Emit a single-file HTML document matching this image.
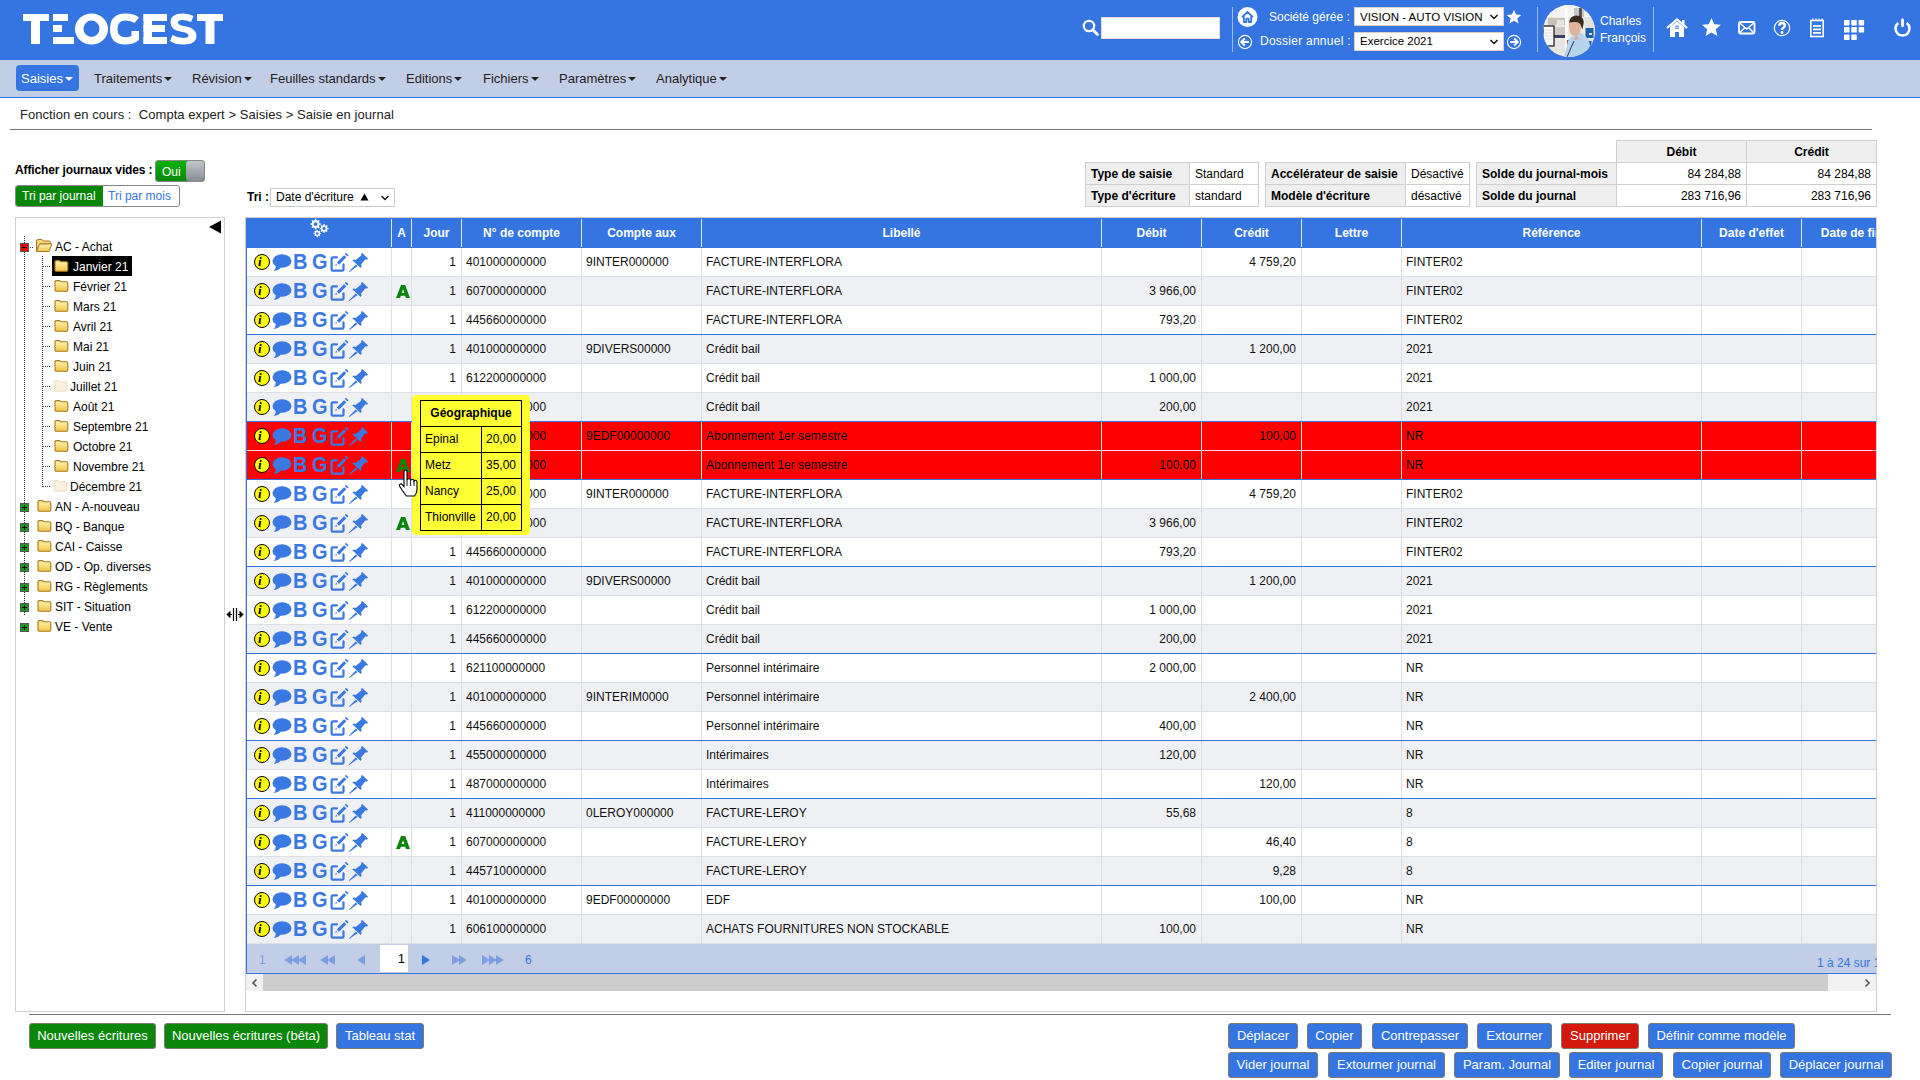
<!DOCTYPE html><html><head><meta charset="utf-8"><title>Teogest</title><style>
*{box-sizing:border-box}
html,body{margin:0;padding:0}
body{width:1920px;height:1080px;overflow:hidden;position:relative;background:#fff;font-family:"Liberation Sans",sans-serif;font-size:12px;color:#000}
.a{position:absolute;white-space:pre}
#top{position:absolute;left:0;top:0;width:1920px;height:60px;background:#3575e2}
#menu{position:absolute;left:0;top:60px;width:1920px;height:38px;background:#c2cee5;border-bottom:1px solid #3575e2}
.mi{position:absolute;top:66px;height:26px;line-height:26px;font-size:13px;color:#222;white-space:pre}
.caret{display:inline-block;width:0;height:0;border-left:4px solid transparent;border-right:4px solid transparent;border-top:4px solid #222;vertical-align:middle;margin-left:2px;position:relative;top:-1px}
.wt{color:#fff}
.btn{position:absolute;height:26px;line-height:24px;font-size:13px;color:#fff;border:1px solid #7d7a70;border-radius:3px;padding:0;text-align:center;white-space:pre}
.bb{background:#3575e2}.bg{background:#0a870a}.br{background:#d2190b}
.it{position:absolute;border-collapse:collapse;font-size:12px}
.it td{border:1px solid #cfcfcf;height:22px;padding:0 5px;white-space:pre}
.it td.l{background:#efefef;font-weight:bold}
.row{position:absolute;left:247px;width:1629px;height:29px;border-bottom:1px solid #dcdfe6;overflow:hidden}
.row.g{background:#eff0f4}
.row.w{background:#fff}
.row.r{background:#ff0000;border-bottom-color:#ffd9d9}
.row.sep{border-bottom-color:#3575e2}
.c{position:absolute;top:0;height:28px;line-height:28px;white-space:pre;overflow:hidden}
.vl{position:absolute;top:0;width:1px;height:28px;background:#dcdfe6}
.r .vl{background:#ffe0e0}
.c.rt{text-align:right;padding-right:5px}
.c.lt{padding-left:4px}
.hd{position:absolute;top:218px;height:30px;line-height:30px;color:#fff;font-weight:bold;text-align:center;white-space:pre}
.hsep{position:absolute;top:219px;width:1px;height:28px;background:#e6e9ee}
.tn{position:absolute;height:20px;line-height:22px;white-space:pre}
</style></head><body>
<div id="top"></div>
<svg class="a" style="left:0;top:0" width="240" height="60" viewBox="0 0 240 60">
<g fill="#fff">
<rect x="23" y="14" width="26" height="7"/><rect x="31" y="14" width="9" height="30"/>
<rect x="53" y="14" width="15" height="7"/><rect x="53" y="25" width="9" height="7"/><rect x="53" y="37" width="21" height="7"/>
<path d="M91.5 13.5a16.5 15.5 0 1 1 0 31a16.5 15.5 0 1 1 0-31zM91.5 20.6a8 8.2 0 1 0 0 16.4a8 8.2 0 1 0 0-16.4z" fill-rule="evenodd"/>
<path d="M139 17.5 L134.5 23 Q131 20.5 125.5 20.5 Q117.5 20.5 117.5 29 Q117.5 37.3 125.5 37.3 Q129 37.3 131.5 36 L131.5 31 L139 31 L139 40 Q133.5 44.5 125 44.5 Q110 44.5 110 29 Q110 13.5 125.5 13.5 Q134.5 13.5 139 17.5Z"/>
<rect x="143.5" y="14" width="8.5" height="30"/><rect x="143.5" y="14" width="23.5" height="7"/><rect x="143.5" y="25" width="21.5" height="7"/><rect x="143.5" y="37" width="23.5" height="7"/>
<path d="M193.5 16 L191 22 Q186 20 182 20 Q178 20 178 22.5 Q178 25 184 26 Q196.5 28 196.5 35.5 Q196.5 44.5 183.5 44.5 Q175 44.5 170 41 L172.5 35 Q177.5 38 183 38 Q188.5 38 188.5 35.5 Q188.5 33 182.5 32 Q170.5 30.5 170.5 22.5 Q170.5 13.5 183 13.5 Q189 13.5 193.5 16Z"/>
<rect x="197" y="14" width="26" height="7"/><rect x="205.5" y="14" width="9" height="30"/>
</g></svg>
<svg class="a" style="left:1082px;top:19px" width="18" height="18" viewBox="0 0 18 18"><circle cx="7" cy="7" r="5.2" fill="none" stroke="#fff" stroke-width="2.2"/><path d="M10.8 10.8 L15.5 15.5" stroke="#fff" stroke-width="2.8" stroke-linecap="round"/></svg>
<div class="a" style="left:1101px;top:17px;width:119px;height:22px;background:#fff;border:1px solid #e8e0d8"></div>
<div class="a" style="left:1232px;top:7px;width:1px;height:45px;background:#9dbbf0"></div>
<svg class="a" style="left:1237px;top:7px" width="22" height="21" viewBox="0 0 22 21"><circle cx="10.5" cy="10" r="10" fill="#fff"/><path d="M5 10.2 L10.5 5 L16 10.2 M6.8 9 V15 H9.3 V11.6 H11.7 V15 H14.2 V9" fill="none" stroke="#3575e2" stroke-width="1.8" stroke-linejoin="round"/></svg>
<svg class="a" style="left:1237px;top:34px" width="16" height="16" viewBox="0 0 16 16"><circle cx="8" cy="8" r="6.6" fill="none" stroke="#fff" stroke-width="1.1"/><path d="M12 8 H4.5 M7.8 4.5 L4.3 8 L7.8 11.5" fill="none" stroke="#fff" stroke-width="2"/></svg>
<div class="a wt" style="left:1269px;top:9px;line-height:16px;font-size:12px">Société gérée :</div>
<div class="a wt" style="left:1260px;top:33px;line-height:16px;font-size:12px;letter-spacing:0.25px">Dossier annuel :</div>
<div class="a" style="left:1354px;top:7px;width:150px;height:19px;background:#fff;border:1px solid #d8d0c4"></div>
<div class="a" style="left:1360px;top:8px;line-height:19px;font-size:11.5px">VISION - AUTO VISION</div>
<svg class="a" style="left:1489px;top:13px" width="10" height="8" viewBox="0 0 10 8"><path d="M1.5 2 L5 5.5 L8.5 2" fill="none" stroke="#111" stroke-width="1.5"/></svg>
<div class="a" style="left:1354px;top:32px;width:150px;height:19px;background:#fff;border:1px solid #d8d0c4"></div>
<div class="a" style="left:1360px;top:32px;line-height:19px;font-size:11.5px">Exercice 2021</div>
<svg class="a" style="left:1489px;top:38px" width="10" height="8" viewBox="0 0 10 8"><path d="M1.5 2 L5 5.5 L8.5 2" fill="none" stroke="#111" stroke-width="1.5"/></svg>
<svg class="a" style="left:1506px;top:9px" width="16" height="16" viewBox="0 0 16 16"><path d="M8 0.8 L10.1 5.6 L15.3 6 L11.3 9.4 L12.6 14.6 L8 11.8 L3.4 14.6 L4.7 9.4 L0.7 6 L5.9 5.6Z" fill="#fff"/></svg>
<svg class="a" style="left:1506px;top:34px" width="16" height="16" viewBox="0 0 16 16"><circle cx="8" cy="8" r="6.6" fill="none" stroke="#fff" stroke-width="1.1"/><path d="M4 8 H11.5 M8.2 4.5 L11.7 8 L8.2 11.5" fill="none" stroke="#fff" stroke-width="2"/></svg>
<div class="a" style="left:1537px;top:7px;width:1px;height:45px;background:#9dbbf0"></div>
<svg class="a" style="left:1543px;top:5px" width="52" height="52" viewBox="0 0 52 52"><defs><clipPath id="cp"><circle cx="26" cy="26" r="26"/></clipPath></defs>
<g clip-path="url(#cp)"><rect width="52" height="52" fill="#ecebe8"/>
<rect x="0" y="0" width="52" height="12" fill="#f3f3f1"/>
<rect x="5" y="13" width="17" height="7" fill="#c9c0b9"/><rect x="14" y="15" width="7" height="6" fill="#e8e4e0"/>
<rect x="5" y="22" width="17" height="8" fill="#d2cbc5"/><rect x="10" y="30" width="12" height="3" fill="#3c3f66"/>
<rect x="5" y="34" width="17" height="14" fill="#e6e5e2"/>
<rect x="22" y="0" width="3" height="52" fill="#fbfbfb"/>
<rect x="31" y="3" width="10" height="9" fill="#c8c8c8"/><rect x="36" y="3" width="3" height="9" fill="#555"/>
<rect x="42" y="12" width="10" height="40" fill="#e4e2de"/>
<rect x="42.5" y="23" width="8" height="10" fill="#1e60aa"/><rect x="46" y="28" width="3" height="2" fill="#ddd"/><rect x="42.5" y="36" width="6" height="6" fill="#1e5fa0"/>
<rect x="0" y="21" width="11" height="20" fill="#fafafa" stroke="#222" stroke-width="1.3"/>
<path d="M1.5 25 H9.5 M1.5 28 H9.5 M1.5 31 H9.5 M1.5 34 H9.5" stroke="#ccd" stroke-width="0.6"/>
<rect x="24" y="35" width="2" height="10" fill="#b33"/>
<path d="M21 52 L25 36 Q31 27 38 28 Q45 31 47 40 L48 52Z" fill="#b6d3ec"/>
<path d="M24 52 L31 36" stroke="#2a3550" stroke-width="1"/>
<path d="M26 20 Q25 14 30 13 Q37 12.5 38 19 L37.5 26 Q36 31 31 31 Q27 30 26.5 25Z" fill="#e0b49a"/>
<path d="M26.3 17.5 Q26.5 11 33 10.5 Q40.5 10.5 40.8 17 L39.5 24.5 Q38.3 22 37.6 19.5 Q36 16.5 31 17 Q28 17.3 26.3 17.5Z" fill="#3b2a20"/>
<path d="M33 30 L36 34 L31 35Z" fill="#d8ab92"/>
</g></svg>
<div class="a wt" style="left:1600px;top:13px;line-height:16px;font-size:12px">Charles</div>
<div class="a wt" style="left:1600px;top:30px;line-height:16px;font-size:12px">François</div>
<div class="a" style="left:1653px;top:7px;width:1px;height:45px;background:#9dbbf0"></div>
<svg class="a" style="left:1666px;top:18px" width="22" height="20" viewBox="0 0 22 20"><path d="M1 10 L11 1.5 L21 10" fill="none" stroke="#fff" stroke-width="2.2"/><path d="M4 9 L11 3.5 L18 9 V19 H13 V14 H9 V19 H4Z" fill="#fff"/><rect x="16" y="2" width="2.5" height="5" fill="#fff"/><rect x="9.3" y="7.6" width="1.4" height="1.4" fill="#3575e2"/><rect x="11.3" y="7.6" width="1.4" height="1.4" fill="#3575e2"/><rect x="9.3" y="9.6" width="1.4" height="1.4" fill="#3575e2"/><rect x="11.3" y="9.6" width="1.4" height="1.4" fill="#3575e2"/></svg>
<svg class="a" style="left:1701px;top:17px" width="21" height="20" viewBox="0 0 21 20"><path d="M10.5 1 L13.2 7.3 L20 7.8 L14.8 12.2 L16.4 19 L10.5 15.4 L4.6 19 L6.2 12.2 L1 7.8 L7.8 7.3Z" fill="#fff"/></svg>
<svg class="a" style="left:1738px;top:21px" width="18" height="14" viewBox="0 0 18 14"><rect x="1" y="1" width="15.5" height="11.5" rx="1.5" fill="none" stroke="#fff" stroke-width="1.8"/><path d="M2 2.2 L8.75 8 L15.5 2.2 M2 11.5 L6.5 7 M15.5 11.5 L11 7" fill="none" stroke="#fff" stroke-width="1.5"/></svg>
<svg class="a" style="left:1773px;top:19px" width="18" height="18" viewBox="0 0 18 18"><circle cx="9" cy="9" r="7.7" fill="none" stroke="#fff" stroke-width="1.2"/><path d="M6.3 6.8 Q6.3 4 9 4 Q11.8 4 11.8 6.5 Q11.8 8 10 9 Q9 9.6 9 11" fill="none" stroke="#fff" stroke-width="2.4"/><circle cx="9" cy="13.5" r="1.4" fill="#fff"/></svg>
<svg class="a" style="left:1809px;top:18px" width="16" height="20" viewBox="0 0 16 20"><rect x="1.8" y="2.5" width="12.4" height="16" fill="none" stroke="#fff" stroke-width="1.6"/><path d="M4 2 V0.5 M7 2 V0.5 M10 2 V0.5 M13 2 V0.5" stroke="#fff" stroke-width="1.2"/><rect x="4" y="7" width="8" height="1.8" fill="#fff"/><rect x="4" y="10.5" width="8" height="1.8" fill="#fff"/><rect x="4" y="14" width="8" height="1.8" fill="#fff"/></svg>
<svg class="a" style="left:1840px;top:16px" width="28" height="28" viewBox="0 0 28 28"><g fill="#fff"><rect x="4" y="3.9" width="5.5" height="5.5" rx="0.6"/><rect x="11.3" y="3.9" width="5.5" height="5.5" rx="0.6"/><rect x="18.6" y="3.9" width="5.5" height="5.5" rx="0.6"/><rect x="4" y="11.1" width="5.5" height="5.5" rx="0.6"/><rect x="11.3" y="11.1" width="5.5" height="5.5" rx="0.6"/><rect x="18.6" y="11.1" width="5.5" height="5.5" rx="0.6"/><rect x="4" y="18.4" width="5.5" height="5.5" rx="0.6"/><rect x="11.3" y="18.4" width="5.5" height="5.5" rx="0.6"/></g></svg>
<svg class="a" style="left:1893px;top:18px" width="19" height="20" viewBox="0 0 19 20"><path d="M5.3 5 A7 7 0 1 0 13.7 5" fill="none" stroke="#fff" stroke-width="2.5"/><rect x="8.1" y="0.5" width="2.8" height="8.5" rx="1.3" fill="#fff"/></svg>
<div id="menu"></div>
<div class="a" style="left:16px;top:65px;width:63px;height:26px;background:#3575e2;border-radius:4px"></div>
<div class="mi" style="left:21px;color:#fff">Saisies<span class="caret" style="border-top-color:#fff"></span></div>
<div class="mi" style="left:94px;color:#222">Traitements<span class="caret" style="border-top-color:#222"></span></div>
<div class="mi" style="left:192px;color:#222">Révision<span class="caret" style="border-top-color:#222"></span></div>
<div class="mi" style="left:270px;color:#222">Feuilles standards<span class="caret" style="border-top-color:#222"></span></div>
<div class="mi" style="left:406px;color:#222">Editions<span class="caret" style="border-top-color:#222"></span></div>
<div class="mi" style="left:483px;color:#222">Fichiers<span class="caret" style="border-top-color:#222"></span></div>
<div class="mi" style="left:559px;color:#222">Paramètres<span class="caret" style="border-top-color:#222"></span></div>
<div class="mi" style="left:656px;color:#222">Analytique<span class="caret" style="border-top-color:#222"></span></div>
<div class="a" style="left:20px;top:107px;line-height:16px;font-size:13px;color:#222;letter-spacing:0.05px">Fonction en cours :  Compta expert &gt; Saisies &gt; Saisie en journal</div>
<div class="a" style="left:10px;top:129px;width:1862px;height:1px;background:#777"></div>
<div class="a" style="left:15px;top:162px;line-height:16px;font-weight:bold;letter-spacing:-0.13px">Afficher journaux vides :</div>
<div class="a" style="left:155px;top:160px;width:50px;height:22px;border:1px solid #888;border-radius:3px;overflow:hidden;background:linear-gradient(#0bb30b,#088808)"><div class="a" style="left:6px;top:1px;line-height:20px;color:#fff;font-size:12px">Oui</div><div class="a" style="left:30px;top:0;width:19px;height:20px;border-radius:3px;background:linear-gradient(#c3c6cb,#878d95)"></div></div>
<div class="a" style="left:15px;top:185px;width:165px;height:22px;border:1px solid #888;border-radius:3px;background:#fff;overflow:hidden"><div class="a" style="left:0;top:0;width:87px;height:20px;background:#0a870a"></div><div class="a" style="left:6px;top:0;line-height:20px;color:#fff">Tri par journal</div><div class="a" style="left:92px;top:0;line-height:20px;color:#3575e2">Tri par mois</div></div>
<div class="a" style="left:247px;top:189px;line-height:16px;font-weight:bold">Tri :</div>
<div class="a" style="left:270px;top:188px;width:125px;height:19px;border:1px solid #ccc;background:#fff"></div>
<div class="a" style="left:276px;top:188px;line-height:18px">Date d'écriture</div><svg class="a" style="left:360px;top:193px" width="9" height="8" viewBox="0 0 9 8"><path d="M4.5 0.6 L8.5 7.6 H0.5Z" fill="#000"/></svg>
<svg class="a" style="left:380px;top:194px" width="10" height="8" viewBox="0 0 10 8"><path d="M1.5 2 L5 5.5 L8.5 2" fill="none" stroke="#111" stroke-width="1.4"/></svg>
<table class="it" style="left:1085px;top:162px">
<tr><td class="l" style="width:104px">Type de saisie</td><td style="width:69px;text-align:left">Standard</td></tr>
<tr><td class="l" style="width:104px">Type d'écriture</td><td style="width:69px;text-align:left">standard</td></tr>
</table>
<table class="it" style="left:1265px;top:162px">
<tr><td class="l" style="width:140px">Accélérateur de saisie</td><td style="width:64px;text-align:left">Désactivé</td></tr>
<tr><td class="l" style="width:140px">Modèle d'écriture</td><td style="width:64px;text-align:left">désactivé</td></tr>
</table>
<table class="it" style="left:1476px;top:140px">
<tr><td style="border:none;width:140px;height:22px"></td><td class="l" style="width:130px;text-align:center">Débit</td><td class="l" style="width:130px;text-align:center">Crédit</td></tr>
<tr><td class="l">Solde du journal-mois</td><td style="text-align:right">84 284,88</td><td style="text-align:right">84 284,88</td></tr>
<tr><td class="l">Solde du journal</td><td style="text-align:right">283 716,96</td><td style="text-align:right">283 716,96</td></tr>
</table>
<div class="a" style="left:15px;top:217px;width:210px;height:795px;border:1px solid #d0d0d0;background:#fff"></div>
<svg class="a" style="left:208px;top:219px" width="14" height="16" viewBox="0 0 14 16"><path d="M1 8 L13 1.5 V14.5Z" fill="#000"/></svg>
<div class="a" style="left:24px;top:236px;width:1px;height:380px;background:repeating-linear-gradient(#333 0 1px,transparent 1px 2px)"></div>
<div class="a" style="left:42px;top:256px;width:1px;height:231px;background:repeating-linear-gradient(#333 0 1px,transparent 1px 2px)"></div>
<div class="a" style="left:20px;top:243px;width:9px;height:9px;background:#e00;border:1px solid #555"><div class="a" style="left:1px;top:3px;width:5px;height:1px;background:#000"></div></div>
<div class="a" style="left:30px;top:247px;width:4px;height:1px;background:repeating-linear-gradient(90deg,#333 0 1px,transparent 1px 2px)"></div>
<svg class="a" style="left:35px;top:238px" width="18" height="15" viewBox="0 0 18 15"><defs><linearGradient id="fo" x1="0" y1="0" x2="0" y2="1"><stop offset="0" stop-color="#fff6c4"/><stop offset="1" stop-color="#f0c24a"/></linearGradient></defs><path d="M1.5 3 Q1.5 1.5 3 1.5 H7 L8.5 3 H14 Q15.5 3 15.5 4.5 V6 H5 L1.5 13Z" fill="#f7d77a" stroke="#a7791e" stroke-width="1"/><path d="M4.5 6 H17 L14 13.5 H1.5Z" fill="url(#fo)" stroke="#a7791e" stroke-width="1"/></svg>
<div class="tn" style="left:55px;top:236px">AC - Achat</div>
<div class="a" style="left:43px;top:266px;width:7px;height:1px;background:repeating-linear-gradient(90deg,#333 0 1px,transparent 1px 2px)"></div>
<div class="a" style="left:52px;top:256px;width:80px;height:20px;background:#000"></div>
<svg class="a" style="left:54px;top:259px" width="16" height="14" viewBox="0 0 16 14"><defs><linearGradient id="fg" x1="0" y1="0" x2="0" y2="1"><stop offset="0" stop-color="#fff3b0"/><stop offset="1" stop-color="#f1c64a"/></linearGradient></defs><path d="M1 2.8 Q1 1.6 2.2 1.6 H5.5 L6.8 2.8 H12.6 Q13.8 2.8 13.8 4 V11 Q13.8 12.2 12.6 12.2 H2.2 Q1 12.2 1 11Z" fill="url(#fg)" stroke="#a7791e" stroke-width="1.1"/></svg>
<div class="tn" style="left:73px;top:256px;color:#fff">Janvier 21</div>
<div class="a" style="left:43px;top:286px;width:7px;height:1px;background:repeating-linear-gradient(90deg,#333 0 1px,transparent 1px 2px)"></div>
<svg class="a" style="left:54px;top:279px" width="16" height="14" viewBox="0 0 16 14"><defs><linearGradient id="fg" x1="0" y1="0" x2="0" y2="1"><stop offset="0" stop-color="#fff3b0"/><stop offset="1" stop-color="#f1c64a"/></linearGradient></defs><path d="M1 2.8 Q1 1.6 2.2 1.6 H5.5 L6.8 2.8 H12.6 Q13.8 2.8 13.8 4 V11 Q13.8 12.2 12.6 12.2 H2.2 Q1 12.2 1 11Z" fill="url(#fg)" stroke="#a7791e" stroke-width="1.1"/></svg>
<div class="tn" style="left:73px;top:276px;color:#000">Février 21</div>
<div class="a" style="left:43px;top:306px;width:7px;height:1px;background:repeating-linear-gradient(90deg,#333 0 1px,transparent 1px 2px)"></div>
<svg class="a" style="left:54px;top:299px" width="16" height="14" viewBox="0 0 16 14"><defs><linearGradient id="fg" x1="0" y1="0" x2="0" y2="1"><stop offset="0" stop-color="#fff3b0"/><stop offset="1" stop-color="#f1c64a"/></linearGradient></defs><path d="M1 2.8 Q1 1.6 2.2 1.6 H5.5 L6.8 2.8 H12.6 Q13.8 2.8 13.8 4 V11 Q13.8 12.2 12.6 12.2 H2.2 Q1 12.2 1 11Z" fill="url(#fg)" stroke="#a7791e" stroke-width="1.1"/></svg>
<div class="tn" style="left:73px;top:296px;color:#000">Mars 21</div>
<div class="a" style="left:43px;top:326px;width:7px;height:1px;background:repeating-linear-gradient(90deg,#333 0 1px,transparent 1px 2px)"></div>
<svg class="a" style="left:54px;top:319px" width="16" height="14" viewBox="0 0 16 14"><defs><linearGradient id="fg" x1="0" y1="0" x2="0" y2="1"><stop offset="0" stop-color="#fff3b0"/><stop offset="1" stop-color="#f1c64a"/></linearGradient></defs><path d="M1 2.8 Q1 1.6 2.2 1.6 H5.5 L6.8 2.8 H12.6 Q13.8 2.8 13.8 4 V11 Q13.8 12.2 12.6 12.2 H2.2 Q1 12.2 1 11Z" fill="url(#fg)" stroke="#a7791e" stroke-width="1.1"/></svg>
<div class="tn" style="left:73px;top:316px;color:#000">Avril 21</div>
<div class="a" style="left:43px;top:346px;width:7px;height:1px;background:repeating-linear-gradient(90deg,#333 0 1px,transparent 1px 2px)"></div>
<svg class="a" style="left:54px;top:339px" width="16" height="14" viewBox="0 0 16 14"><defs><linearGradient id="fg" x1="0" y1="0" x2="0" y2="1"><stop offset="0" stop-color="#fff3b0"/><stop offset="1" stop-color="#f1c64a"/></linearGradient></defs><path d="M1 2.8 Q1 1.6 2.2 1.6 H5.5 L6.8 2.8 H12.6 Q13.8 2.8 13.8 4 V11 Q13.8 12.2 12.6 12.2 H2.2 Q1 12.2 1 11Z" fill="url(#fg)" stroke="#a7791e" stroke-width="1.1"/></svg>
<div class="tn" style="left:73px;top:336px;color:#000">Mai 21</div>
<div class="a" style="left:43px;top:366px;width:7px;height:1px;background:repeating-linear-gradient(90deg,#333 0 1px,transparent 1px 2px)"></div>
<svg class="a" style="left:54px;top:359px" width="16" height="14" viewBox="0 0 16 14"><defs><linearGradient id="fg" x1="0" y1="0" x2="0" y2="1"><stop offset="0" stop-color="#fff3b0"/><stop offset="1" stop-color="#f1c64a"/></linearGradient></defs><path d="M1 2.8 Q1 1.6 2.2 1.6 H5.5 L6.8 2.8 H12.6 Q13.8 2.8 13.8 4 V11 Q13.8 12.2 12.6 12.2 H2.2 Q1 12.2 1 11Z" fill="url(#fg)" stroke="#a7791e" stroke-width="1.1"/></svg>
<div class="tn" style="left:73px;top:356px;color:#000">Juin 21</div>
<div class="a" style="left:43px;top:386px;width:7px;height:1px;background:repeating-linear-gradient(90deg,#333 0 1px,transparent 1px 2px)"></div>
<svg class="a" style="left:53px;top:379px" width="16" height="14" viewBox="0 0 16 14"><path d="M1 2.8 Q1 1.6 2.2 1.6 H5.5 L6.8 2.8 H12.6 Q13.8 2.8 13.8 4 V11 Q13.8 12.2 12.6 12.2 H2.2 Q1 12.2 1 11Z" fill="#fbf0dc" stroke="#e8dcc4" stroke-width="1"/></svg>
<div class="tn" style="left:70px;top:376px;color:#000">Juillet 21</div>
<div class="a" style="left:43px;top:406px;width:7px;height:1px;background:repeating-linear-gradient(90deg,#333 0 1px,transparent 1px 2px)"></div>
<svg class="a" style="left:54px;top:399px" width="16" height="14" viewBox="0 0 16 14"><defs><linearGradient id="fg" x1="0" y1="0" x2="0" y2="1"><stop offset="0" stop-color="#fff3b0"/><stop offset="1" stop-color="#f1c64a"/></linearGradient></defs><path d="M1 2.8 Q1 1.6 2.2 1.6 H5.5 L6.8 2.8 H12.6 Q13.8 2.8 13.8 4 V11 Q13.8 12.2 12.6 12.2 H2.2 Q1 12.2 1 11Z" fill="url(#fg)" stroke="#a7791e" stroke-width="1.1"/></svg>
<div class="tn" style="left:73px;top:396px;color:#000">Août 21</div>
<div class="a" style="left:43px;top:426px;width:7px;height:1px;background:repeating-linear-gradient(90deg,#333 0 1px,transparent 1px 2px)"></div>
<svg class="a" style="left:54px;top:419px" width="16" height="14" viewBox="0 0 16 14"><defs><linearGradient id="fg" x1="0" y1="0" x2="0" y2="1"><stop offset="0" stop-color="#fff3b0"/><stop offset="1" stop-color="#f1c64a"/></linearGradient></defs><path d="M1 2.8 Q1 1.6 2.2 1.6 H5.5 L6.8 2.8 H12.6 Q13.8 2.8 13.8 4 V11 Q13.8 12.2 12.6 12.2 H2.2 Q1 12.2 1 11Z" fill="url(#fg)" stroke="#a7791e" stroke-width="1.1"/></svg>
<div class="tn" style="left:73px;top:416px;color:#000">Septembre 21</div>
<div class="a" style="left:43px;top:446px;width:7px;height:1px;background:repeating-linear-gradient(90deg,#333 0 1px,transparent 1px 2px)"></div>
<svg class="a" style="left:54px;top:439px" width="16" height="14" viewBox="0 0 16 14"><defs><linearGradient id="fg" x1="0" y1="0" x2="0" y2="1"><stop offset="0" stop-color="#fff3b0"/><stop offset="1" stop-color="#f1c64a"/></linearGradient></defs><path d="M1 2.8 Q1 1.6 2.2 1.6 H5.5 L6.8 2.8 H12.6 Q13.8 2.8 13.8 4 V11 Q13.8 12.2 12.6 12.2 H2.2 Q1 12.2 1 11Z" fill="url(#fg)" stroke="#a7791e" stroke-width="1.1"/></svg>
<div class="tn" style="left:73px;top:436px;color:#000">Octobre 21</div>
<div class="a" style="left:43px;top:466px;width:7px;height:1px;background:repeating-linear-gradient(90deg,#333 0 1px,transparent 1px 2px)"></div>
<svg class="a" style="left:54px;top:459px" width="16" height="14" viewBox="0 0 16 14"><defs><linearGradient id="fg" x1="0" y1="0" x2="0" y2="1"><stop offset="0" stop-color="#fff3b0"/><stop offset="1" stop-color="#f1c64a"/></linearGradient></defs><path d="M1 2.8 Q1 1.6 2.2 1.6 H5.5 L6.8 2.8 H12.6 Q13.8 2.8 13.8 4 V11 Q13.8 12.2 12.6 12.2 H2.2 Q1 12.2 1 11Z" fill="url(#fg)" stroke="#a7791e" stroke-width="1.1"/></svg>
<div class="tn" style="left:73px;top:456px;color:#000">Novembre 21</div>
<div class="a" style="left:43px;top:486px;width:7px;height:1px;background:repeating-linear-gradient(90deg,#333 0 1px,transparent 1px 2px)"></div>
<svg class="a" style="left:53px;top:479px" width="16" height="14" viewBox="0 0 16 14"><path d="M1 2.8 Q1 1.6 2.2 1.6 H5.5 L6.8 2.8 H12.6 Q13.8 2.8 13.8 4 V11 Q13.8 12.2 12.6 12.2 H2.2 Q1 12.2 1 11Z" fill="#fbf0dc" stroke="#e8dcc4" stroke-width="1"/></svg>
<div class="tn" style="left:70px;top:476px;color:#000">Décembre 21</div>
<div class="a" style="left:20px;top:503px;width:9px;height:9px;background:#1a9a1a;border:1px solid #555"><div class="a" style="left:1px;top:3px;width:5px;height:1px;background:#000"></div><div class="a" style="left:3px;top:1px;width:1px;height:5px;background:#000"></div></div>
<svg class="a" style="left:37px;top:499px" width="16" height="14" viewBox="0 0 16 14"><defs><linearGradient id="fg" x1="0" y1="0" x2="0" y2="1"><stop offset="0" stop-color="#fff3b0"/><stop offset="1" stop-color="#f1c64a"/></linearGradient></defs><path d="M1 2.8 Q1 1.6 2.2 1.6 H5.5 L6.8 2.8 H12.6 Q13.8 2.8 13.8 4 V11 Q13.8 12.2 12.6 12.2 H2.2 Q1 12.2 1 11Z" fill="url(#fg)" stroke="#a7791e" stroke-width="1.1"/></svg>
<div class="tn" style="left:55px;top:496px">AN - A-nouveau</div>
<div class="a" style="left:20px;top:523px;width:9px;height:9px;background:#1a9a1a;border:1px solid #555"><div class="a" style="left:1px;top:3px;width:5px;height:1px;background:#000"></div><div class="a" style="left:3px;top:1px;width:1px;height:5px;background:#000"></div></div>
<svg class="a" style="left:37px;top:519px" width="16" height="14" viewBox="0 0 16 14"><defs><linearGradient id="fg" x1="0" y1="0" x2="0" y2="1"><stop offset="0" stop-color="#fff3b0"/><stop offset="1" stop-color="#f1c64a"/></linearGradient></defs><path d="M1 2.8 Q1 1.6 2.2 1.6 H5.5 L6.8 2.8 H12.6 Q13.8 2.8 13.8 4 V11 Q13.8 12.2 12.6 12.2 H2.2 Q1 12.2 1 11Z" fill="url(#fg)" stroke="#a7791e" stroke-width="1.1"/></svg>
<div class="tn" style="left:55px;top:516px">BQ - Banque</div>
<div class="a" style="left:20px;top:543px;width:9px;height:9px;background:#1a9a1a;border:1px solid #555"><div class="a" style="left:1px;top:3px;width:5px;height:1px;background:#000"></div><div class="a" style="left:3px;top:1px;width:1px;height:5px;background:#000"></div></div>
<svg class="a" style="left:37px;top:539px" width="16" height="14" viewBox="0 0 16 14"><defs><linearGradient id="fg" x1="0" y1="0" x2="0" y2="1"><stop offset="0" stop-color="#fff3b0"/><stop offset="1" stop-color="#f1c64a"/></linearGradient></defs><path d="M1 2.8 Q1 1.6 2.2 1.6 H5.5 L6.8 2.8 H12.6 Q13.8 2.8 13.8 4 V11 Q13.8 12.2 12.6 12.2 H2.2 Q1 12.2 1 11Z" fill="url(#fg)" stroke="#a7791e" stroke-width="1.1"/></svg>
<div class="tn" style="left:55px;top:536px">CAI - Caisse</div>
<div class="a" style="left:20px;top:563px;width:9px;height:9px;background:#1a9a1a;border:1px solid #555"><div class="a" style="left:1px;top:3px;width:5px;height:1px;background:#000"></div><div class="a" style="left:3px;top:1px;width:1px;height:5px;background:#000"></div></div>
<svg class="a" style="left:37px;top:559px" width="16" height="14" viewBox="0 0 16 14"><defs><linearGradient id="fg" x1="0" y1="0" x2="0" y2="1"><stop offset="0" stop-color="#fff3b0"/><stop offset="1" stop-color="#f1c64a"/></linearGradient></defs><path d="M1 2.8 Q1 1.6 2.2 1.6 H5.5 L6.8 2.8 H12.6 Q13.8 2.8 13.8 4 V11 Q13.8 12.2 12.6 12.2 H2.2 Q1 12.2 1 11Z" fill="url(#fg)" stroke="#a7791e" stroke-width="1.1"/></svg>
<div class="tn" style="left:55px;top:556px">OD - Op. diverses</div>
<div class="a" style="left:20px;top:583px;width:9px;height:9px;background:#1a9a1a;border:1px solid #555"><div class="a" style="left:1px;top:3px;width:5px;height:1px;background:#000"></div><div class="a" style="left:3px;top:1px;width:1px;height:5px;background:#000"></div></div>
<svg class="a" style="left:37px;top:579px" width="16" height="14" viewBox="0 0 16 14"><defs><linearGradient id="fg" x1="0" y1="0" x2="0" y2="1"><stop offset="0" stop-color="#fff3b0"/><stop offset="1" stop-color="#f1c64a"/></linearGradient></defs><path d="M1 2.8 Q1 1.6 2.2 1.6 H5.5 L6.8 2.8 H12.6 Q13.8 2.8 13.8 4 V11 Q13.8 12.2 12.6 12.2 H2.2 Q1 12.2 1 11Z" fill="url(#fg)" stroke="#a7791e" stroke-width="1.1"/></svg>
<div class="tn" style="left:55px;top:576px">RG - Règlements</div>
<div class="a" style="left:20px;top:603px;width:9px;height:9px;background:#1a9a1a;border:1px solid #555"><div class="a" style="left:1px;top:3px;width:5px;height:1px;background:#000"></div><div class="a" style="left:3px;top:1px;width:1px;height:5px;background:#000"></div></div>
<svg class="a" style="left:37px;top:599px" width="16" height="14" viewBox="0 0 16 14"><defs><linearGradient id="fg" x1="0" y1="0" x2="0" y2="1"><stop offset="0" stop-color="#fff3b0"/><stop offset="1" stop-color="#f1c64a"/></linearGradient></defs><path d="M1 2.8 Q1 1.6 2.2 1.6 H5.5 L6.8 2.8 H12.6 Q13.8 2.8 13.8 4 V11 Q13.8 12.2 12.6 12.2 H2.2 Q1 12.2 1 11Z" fill="url(#fg)" stroke="#a7791e" stroke-width="1.1"/></svg>
<div class="tn" style="left:55px;top:596px">SIT - Situation</div>
<div class="a" style="left:20px;top:623px;width:9px;height:9px;background:#1a9a1a;border:1px solid #555"><div class="a" style="left:1px;top:3px;width:5px;height:1px;background:#000"></div><div class="a" style="left:3px;top:1px;width:1px;height:5px;background:#000"></div></div>
<svg class="a" style="left:37px;top:619px" width="16" height="14" viewBox="0 0 16 14"><defs><linearGradient id="fg" x1="0" y1="0" x2="0" y2="1"><stop offset="0" stop-color="#fff3b0"/><stop offset="1" stop-color="#f1c64a"/></linearGradient></defs><path d="M1 2.8 Q1 1.6 2.2 1.6 H5.5 L6.8 2.8 H12.6 Q13.8 2.8 13.8 4 V11 Q13.8 12.2 12.6 12.2 H2.2 Q1 12.2 1 11Z" fill="url(#fg)" stroke="#a7791e" stroke-width="1.1"/></svg>
<div class="tn" style="left:55px;top:616px">VE - Vente</div>
<svg class="a" style="left:226px;top:607px" width="18" height="15" viewBox="0 0 18 15"><path d="M7.5 1 V14 M10.5 1 V14" stroke="#000" stroke-width="1.2"/><path d="M1 7.5 H6 M12 7.5 H17" stroke="#000" stroke-width="1.2"/><path d="M1 7.5 L4 4.5 V10.5Z M17 7.5 L14 4.5 V10.5Z" fill="#000" stroke="#000"/></svg>
<div class="a" style="left:245px;top:217px;width:1632px;height:795px;border:1px solid #d0d0d0;background:#fff"></div>
<div class="a" style="left:246px;top:218px;width:1630px;height:30px;background:#3575e2"></div>
<div class="a" style="left:246px;top:218px;width:1px;height:756px;background:#3575e2"></div>
<div class="a" style="left:246px;top:218px;width:1630px;height:30px;overflow:hidden">
<div class="hd" style="top:0;left:1px;width:144px"></div>
<div class="hsep" style="top:1px;left:145px"></div>
<div class="hd" style="top:0;left:146px;width:19px">A</div>
<div class="hsep" style="top:1px;left:165px"></div>
<div class="hd" style="top:0;left:166px;width:49px">Jour</div>
<div class="hsep" style="top:1px;left:215px"></div>
<div class="hd" style="top:0;left:216px;width:119px">N° de compte</div>
<div class="hsep" style="top:1px;left:335px"></div>
<div class="hd" style="top:0;left:336px;width:119px">Compte aux</div>
<div class="hsep" style="top:1px;left:455px"></div>
<div class="hd" style="top:0;left:456px;width:399px">Libellé</div>
<div class="hsep" style="top:1px;left:855px"></div>
<div class="hd" style="top:0;left:856px;width:99px">Débit</div>
<div class="hsep" style="top:1px;left:955px"></div>
<div class="hd" style="top:0;left:956px;width:99px">Crédit</div>
<div class="hsep" style="top:1px;left:1055px"></div>
<div class="hd" style="top:0;left:1056px;width:99px">Lettre</div>
<div class="hsep" style="top:1px;left:1155px"></div>
<div class="hd" style="top:0;left:1156px;width:299px">Référence</div>
<div class="hsep" style="top:1px;left:1455px"></div>
<div class="hd" style="top:0;left:1456px;width:99px">Date d'effet</div>
<div class="hsep" style="top:1px;left:1555px"></div>
<div class="hd" style="top:0;left:1556px;width:99px">Date de fin</div>
</div>
<svg class="a" style="left:309px;top:218px" width="21" height="20" viewBox="0 0 21 20"><g fill="#fff">
<path id="gr" d="M6 0.8 L7.2 0.8 L7.5 2.3 L8.6 2.8 L9.9 2 L10.7 2.8 L9.9 4.1 L10.4 5.2 L11.9 5.5 V6.7 L10.4 7 L9.9 8.1 L10.7 9.4 L9.9 10.2 L8.6 9.4 L7.5 9.9 L7.2 11.4 H6 L5.7 9.9 L4.6 9.4 L3.3 10.2 L2.5 9.4 L3.3 8.1 L2.8 7 L1.3 6.7 V5.5 L2.8 5.2 L3.3 4.1 L2.5 2.8 L3.3 2 L4.6 2.8 L5.7 2.3Z M6.6 4.2 A1.9 1.9 0 1 0 6.6 8 A1.9 1.9 0 1 0 6.6 4.2Z" fill-rule="evenodd"/>
</g>
<g fill="#fff" transform="translate(9.5 5.3) scale(0.85)"><use href="#gr"/></g>
<g fill="#fff" transform="translate(3.6 11.2) scale(0.7)"><use href="#gr"/></g>
</svg>
<div class="row w" style="top:248px;color:#111">
<div class="vl" style="left:144px"></div>
<div class="vl" style="left:164px"></div>
<div class="vl" style="left:214px"></div>
<div class="vl" style="left:334px"></div>
<div class="vl" style="left:454px"></div>
<div class="vl" style="left:854px"></div>
<div class="vl" style="left:954px"></div>
<div class="vl" style="left:1054px"></div>
<div class="vl" style="left:1154px"></div>
<div class="vl" style="left:1454px"></div>
<div class="vl" style="left:1554px"></div>
<div class="a" style="left:0;top:0;width:145px;height:28px"><div class="a" style="left:7px;top:6px;width:16px;height:16px;border-radius:50%;background:#ffff00;border:1.3px solid #000"></div><div class="a" style="left:11px;top:5px;font:italic bold 13px/17px 'Liberation Serif';color:#000">i</div><svg class="a" style="left:25px;top:6px" width="20" height="18" viewBox="0 0 20 18"><ellipse cx="10" cy="7" rx="9.5" ry="6.8" fill="#3a78e2"/><path d="M4 11 Q4 15 1.5 17 Q7 16.5 9.5 12.5Z" fill="#3a78e2"/></svg><div class="a" style="left:46px;top:3px;font:bold 20px/22px 'Liberation Sans';color:#3a78e2;transform:scaleY(1.1);transform-origin:0 18px">B</div><div class="a" style="left:65px;top:3px;font:bold 20px/22px 'Liberation Sans';color:#3a78e2;transform:scaleY(1.1);transform-origin:0 18px">G</div><svg class="a" style="left:83px;top:4px" width="20" height="21" viewBox="0 0 20 21"><path d="M7 5.3 H3 Q1.6 5.3 1.6 6.7 V17.2 Q1.6 18.6 3 18.6 H12.1 Q13.5 18.6 13.5 17.2 V12.4" fill="none" stroke="#3a78e2" stroke-width="2.2" stroke-linecap="round"/><path d="M6.8 10.5 L14.05 3.16 L16.35 5.22 L9 12.68Z M5 13.8 L6.1 11.9 L7.4 13.3Z" fill="#3a78e2"/><path d="M15.9 1.8 L17.5 3.3" stroke="#3a78e2" stroke-width="1.7" stroke-linecap="round"/></svg><svg class="a" style="left:101px;top:4px" width="21" height="21" viewBox="0 0 21 21"><path d="M14.2 1 L20 6.5 L19.2 7.4 L17.2 7.6 L13.1 12.6 L13.7 14.5 L12.6 16.1 L4.3 8.3 L5.9 7.4 L7.6 7.9 L13.2 3.4 L13.2 1.7Z" fill="#3a78e2"/><path d="M7.8 12.4 L9.6 14 L1.4 20 L0.9 19.5Z" fill="#3a78e2"/></svg></div>
<div class="c rt" style="left:165px;width:49px">1</div>
<div class="c lt" style="left:215px;width:119px">401000000000</div>
<div class="c lt" style="left:335px;width:119px">9INTER000000</div>
<div class="c lt" style="left:455px;width:399px">FACTURE-INTERFLORA</div>
<div class="c rt" style="left:855px;width:99px"></div>
<div class="c rt" style="left:955px;width:99px">4 759,20</div>
<div class="c lt" style="left:1155px;width:299px">FINTER02</div>
</div>
<div class="row g" style="top:277px;color:#111">
<div class="vl" style="left:144px"></div>
<div class="vl" style="left:164px"></div>
<div class="vl" style="left:214px"></div>
<div class="vl" style="left:334px"></div>
<div class="vl" style="left:454px"></div>
<div class="vl" style="left:854px"></div>
<div class="vl" style="left:954px"></div>
<div class="vl" style="left:1054px"></div>
<div class="vl" style="left:1154px"></div>
<div class="vl" style="left:1454px"></div>
<div class="vl" style="left:1554px"></div>
<div class="a" style="left:0;top:0;width:145px;height:28px"><div class="a" style="left:7px;top:6px;width:16px;height:16px;border-radius:50%;background:#ffff00;border:1.3px solid #000"></div><div class="a" style="left:11px;top:5px;font:italic bold 13px/17px 'Liberation Serif';color:#000">i</div><svg class="a" style="left:25px;top:6px" width="20" height="18" viewBox="0 0 20 18"><ellipse cx="10" cy="7" rx="9.5" ry="6.8" fill="#3a78e2"/><path d="M4 11 Q4 15 1.5 17 Q7 16.5 9.5 12.5Z" fill="#3a78e2"/></svg><div class="a" style="left:46px;top:3px;font:bold 20px/22px 'Liberation Sans';color:#3a78e2;transform:scaleY(1.1);transform-origin:0 18px">B</div><div class="a" style="left:65px;top:3px;font:bold 20px/22px 'Liberation Sans';color:#3a78e2;transform:scaleY(1.1);transform-origin:0 18px">G</div><svg class="a" style="left:83px;top:4px" width="20" height="21" viewBox="0 0 20 21"><path d="M7 5.3 H3 Q1.6 5.3 1.6 6.7 V17.2 Q1.6 18.6 3 18.6 H12.1 Q13.5 18.6 13.5 17.2 V12.4" fill="none" stroke="#3a78e2" stroke-width="2.2" stroke-linecap="round"/><path d="M6.8 10.5 L14.05 3.16 L16.35 5.22 L9 12.68Z M5 13.8 L6.1 11.9 L7.4 13.3Z" fill="#3a78e2"/><path d="M15.9 1.8 L17.5 3.3" stroke="#3a78e2" stroke-width="1.7" stroke-linecap="round"/></svg><svg class="a" style="left:101px;top:4px" width="21" height="21" viewBox="0 0 21 21"><path d="M14.2 1 L20 6.5 L19.2 7.4 L17.2 7.6 L13.1 12.6 L13.7 14.5 L12.6 16.1 L4.3 8.3 L5.9 7.4 L7.6 7.9 L13.2 3.4 L13.2 1.7Z" fill="#3a78e2"/><path d="M7.8 12.4 L9.6 14 L1.4 20 L0.9 19.5Z" fill="#3a78e2"/></svg></div>
<div class="a" style="left:145px;top:0;width:20px;height:28px"><svg class="a" style="left:3.9px;top:8px" width="15" height="14" viewBox="0 0 15 14"><path d="M5 0 H9.2 L14 13 H10 L9.2 10.7 H4.9 L4.1 13 H0Z M5.7 8.1 H8.4 L7.05 4.3Z" fill="#0a850a" fill-rule="evenodd"/></svg></div>
<div class="c rt" style="left:165px;width:49px">1</div>
<div class="c lt" style="left:215px;width:119px">607000000000</div>
<div class="c lt" style="left:335px;width:119px"></div>
<div class="c lt" style="left:455px;width:399px">FACTURE-INTERFLORA</div>
<div class="c rt" style="left:855px;width:99px">3 966,00</div>
<div class="c rt" style="left:955px;width:99px"></div>
<div class="c lt" style="left:1155px;width:299px">FINTER02</div>
</div>
<div class="row w sep" style="top:306px;color:#111">
<div class="vl" style="left:144px"></div>
<div class="vl" style="left:164px"></div>
<div class="vl" style="left:214px"></div>
<div class="vl" style="left:334px"></div>
<div class="vl" style="left:454px"></div>
<div class="vl" style="left:854px"></div>
<div class="vl" style="left:954px"></div>
<div class="vl" style="left:1054px"></div>
<div class="vl" style="left:1154px"></div>
<div class="vl" style="left:1454px"></div>
<div class="vl" style="left:1554px"></div>
<div class="a" style="left:0;top:0;width:145px;height:28px"><div class="a" style="left:7px;top:6px;width:16px;height:16px;border-radius:50%;background:#ffff00;border:1.3px solid #000"></div><div class="a" style="left:11px;top:5px;font:italic bold 13px/17px 'Liberation Serif';color:#000">i</div><svg class="a" style="left:25px;top:6px" width="20" height="18" viewBox="0 0 20 18"><ellipse cx="10" cy="7" rx="9.5" ry="6.8" fill="#3a78e2"/><path d="M4 11 Q4 15 1.5 17 Q7 16.5 9.5 12.5Z" fill="#3a78e2"/></svg><div class="a" style="left:46px;top:3px;font:bold 20px/22px 'Liberation Sans';color:#3a78e2;transform:scaleY(1.1);transform-origin:0 18px">B</div><div class="a" style="left:65px;top:3px;font:bold 20px/22px 'Liberation Sans';color:#3a78e2;transform:scaleY(1.1);transform-origin:0 18px">G</div><svg class="a" style="left:83px;top:4px" width="20" height="21" viewBox="0 0 20 21"><path d="M7 5.3 H3 Q1.6 5.3 1.6 6.7 V17.2 Q1.6 18.6 3 18.6 H12.1 Q13.5 18.6 13.5 17.2 V12.4" fill="none" stroke="#3a78e2" stroke-width="2.2" stroke-linecap="round"/><path d="M6.8 10.5 L14.05 3.16 L16.35 5.22 L9 12.68Z M5 13.8 L6.1 11.9 L7.4 13.3Z" fill="#3a78e2"/><path d="M15.9 1.8 L17.5 3.3" stroke="#3a78e2" stroke-width="1.7" stroke-linecap="round"/></svg><svg class="a" style="left:101px;top:4px" width="21" height="21" viewBox="0 0 21 21"><path d="M14.2 1 L20 6.5 L19.2 7.4 L17.2 7.6 L13.1 12.6 L13.7 14.5 L12.6 16.1 L4.3 8.3 L5.9 7.4 L7.6 7.9 L13.2 3.4 L13.2 1.7Z" fill="#3a78e2"/><path d="M7.8 12.4 L9.6 14 L1.4 20 L0.9 19.5Z" fill="#3a78e2"/></svg></div>
<div class="c rt" style="left:165px;width:49px">1</div>
<div class="c lt" style="left:215px;width:119px">445660000000</div>
<div class="c lt" style="left:335px;width:119px"></div>
<div class="c lt" style="left:455px;width:399px">FACTURE-INTERFLORA</div>
<div class="c rt" style="left:855px;width:99px">793,20</div>
<div class="c rt" style="left:955px;width:99px"></div>
<div class="c lt" style="left:1155px;width:299px">FINTER02</div>
</div>
<div class="row g" style="top:335px;color:#111">
<div class="vl" style="left:144px"></div>
<div class="vl" style="left:164px"></div>
<div class="vl" style="left:214px"></div>
<div class="vl" style="left:334px"></div>
<div class="vl" style="left:454px"></div>
<div class="vl" style="left:854px"></div>
<div class="vl" style="left:954px"></div>
<div class="vl" style="left:1054px"></div>
<div class="vl" style="left:1154px"></div>
<div class="vl" style="left:1454px"></div>
<div class="vl" style="left:1554px"></div>
<div class="a" style="left:0;top:0;width:145px;height:28px"><div class="a" style="left:7px;top:6px;width:16px;height:16px;border-radius:50%;background:#ffff00;border:1.3px solid #000"></div><div class="a" style="left:11px;top:5px;font:italic bold 13px/17px 'Liberation Serif';color:#000">i</div><svg class="a" style="left:25px;top:6px" width="20" height="18" viewBox="0 0 20 18"><ellipse cx="10" cy="7" rx="9.5" ry="6.8" fill="#3a78e2"/><path d="M4 11 Q4 15 1.5 17 Q7 16.5 9.5 12.5Z" fill="#3a78e2"/></svg><div class="a" style="left:46px;top:3px;font:bold 20px/22px 'Liberation Sans';color:#3a78e2;transform:scaleY(1.1);transform-origin:0 18px">B</div><div class="a" style="left:65px;top:3px;font:bold 20px/22px 'Liberation Sans';color:#3a78e2;transform:scaleY(1.1);transform-origin:0 18px">G</div><svg class="a" style="left:83px;top:4px" width="20" height="21" viewBox="0 0 20 21"><path d="M7 5.3 H3 Q1.6 5.3 1.6 6.7 V17.2 Q1.6 18.6 3 18.6 H12.1 Q13.5 18.6 13.5 17.2 V12.4" fill="none" stroke="#3a78e2" stroke-width="2.2" stroke-linecap="round"/><path d="M6.8 10.5 L14.05 3.16 L16.35 5.22 L9 12.68Z M5 13.8 L6.1 11.9 L7.4 13.3Z" fill="#3a78e2"/><path d="M15.9 1.8 L17.5 3.3" stroke="#3a78e2" stroke-width="1.7" stroke-linecap="round"/></svg><svg class="a" style="left:101px;top:4px" width="21" height="21" viewBox="0 0 21 21"><path d="M14.2 1 L20 6.5 L19.2 7.4 L17.2 7.6 L13.1 12.6 L13.7 14.5 L12.6 16.1 L4.3 8.3 L5.9 7.4 L7.6 7.9 L13.2 3.4 L13.2 1.7Z" fill="#3a78e2"/><path d="M7.8 12.4 L9.6 14 L1.4 20 L0.9 19.5Z" fill="#3a78e2"/></svg></div>
<div class="c rt" style="left:165px;width:49px">1</div>
<div class="c lt" style="left:215px;width:119px">401000000000</div>
<div class="c lt" style="left:335px;width:119px">9DIVERS00000</div>
<div class="c lt" style="left:455px;width:399px">Crédit bail</div>
<div class="c rt" style="left:855px;width:99px"></div>
<div class="c rt" style="left:955px;width:99px">1 200,00</div>
<div class="c lt" style="left:1155px;width:299px">2021</div>
</div>
<div class="row w" style="top:364px;color:#111">
<div class="vl" style="left:144px"></div>
<div class="vl" style="left:164px"></div>
<div class="vl" style="left:214px"></div>
<div class="vl" style="left:334px"></div>
<div class="vl" style="left:454px"></div>
<div class="vl" style="left:854px"></div>
<div class="vl" style="left:954px"></div>
<div class="vl" style="left:1054px"></div>
<div class="vl" style="left:1154px"></div>
<div class="vl" style="left:1454px"></div>
<div class="vl" style="left:1554px"></div>
<div class="a" style="left:0;top:0;width:145px;height:28px"><div class="a" style="left:7px;top:6px;width:16px;height:16px;border-radius:50%;background:#ffff00;border:1.3px solid #000"></div><div class="a" style="left:11px;top:5px;font:italic bold 13px/17px 'Liberation Serif';color:#000">i</div><svg class="a" style="left:25px;top:6px" width="20" height="18" viewBox="0 0 20 18"><ellipse cx="10" cy="7" rx="9.5" ry="6.8" fill="#3a78e2"/><path d="M4 11 Q4 15 1.5 17 Q7 16.5 9.5 12.5Z" fill="#3a78e2"/></svg><div class="a" style="left:46px;top:3px;font:bold 20px/22px 'Liberation Sans';color:#3a78e2;transform:scaleY(1.1);transform-origin:0 18px">B</div><div class="a" style="left:65px;top:3px;font:bold 20px/22px 'Liberation Sans';color:#3a78e2;transform:scaleY(1.1);transform-origin:0 18px">G</div><svg class="a" style="left:83px;top:4px" width="20" height="21" viewBox="0 0 20 21"><path d="M7 5.3 H3 Q1.6 5.3 1.6 6.7 V17.2 Q1.6 18.6 3 18.6 H12.1 Q13.5 18.6 13.5 17.2 V12.4" fill="none" stroke="#3a78e2" stroke-width="2.2" stroke-linecap="round"/><path d="M6.8 10.5 L14.05 3.16 L16.35 5.22 L9 12.68Z M5 13.8 L6.1 11.9 L7.4 13.3Z" fill="#3a78e2"/><path d="M15.9 1.8 L17.5 3.3" stroke="#3a78e2" stroke-width="1.7" stroke-linecap="round"/></svg><svg class="a" style="left:101px;top:4px" width="21" height="21" viewBox="0 0 21 21"><path d="M14.2 1 L20 6.5 L19.2 7.4 L17.2 7.6 L13.1 12.6 L13.7 14.5 L12.6 16.1 L4.3 8.3 L5.9 7.4 L7.6 7.9 L13.2 3.4 L13.2 1.7Z" fill="#3a78e2"/><path d="M7.8 12.4 L9.6 14 L1.4 20 L0.9 19.5Z" fill="#3a78e2"/></svg></div>
<div class="c rt" style="left:165px;width:49px">1</div>
<div class="c lt" style="left:215px;width:119px">612200000000</div>
<div class="c lt" style="left:335px;width:119px"></div>
<div class="c lt" style="left:455px;width:399px">Crédit bail</div>
<div class="c rt" style="left:855px;width:99px">1 000,00</div>
<div class="c rt" style="left:955px;width:99px"></div>
<div class="c lt" style="left:1155px;width:299px">2021</div>
</div>
<div class="row g sep" style="top:393px;color:#111">
<div class="vl" style="left:144px"></div>
<div class="vl" style="left:164px"></div>
<div class="vl" style="left:214px"></div>
<div class="vl" style="left:334px"></div>
<div class="vl" style="left:454px"></div>
<div class="vl" style="left:854px"></div>
<div class="vl" style="left:954px"></div>
<div class="vl" style="left:1054px"></div>
<div class="vl" style="left:1154px"></div>
<div class="vl" style="left:1454px"></div>
<div class="vl" style="left:1554px"></div>
<div class="a" style="left:0;top:0;width:145px;height:28px"><div class="a" style="left:7px;top:6px;width:16px;height:16px;border-radius:50%;background:#ffff00;border:1.3px solid #000"></div><div class="a" style="left:11px;top:5px;font:italic bold 13px/17px 'Liberation Serif';color:#000">i</div><svg class="a" style="left:25px;top:6px" width="20" height="18" viewBox="0 0 20 18"><ellipse cx="10" cy="7" rx="9.5" ry="6.8" fill="#3a78e2"/><path d="M4 11 Q4 15 1.5 17 Q7 16.5 9.5 12.5Z" fill="#3a78e2"/></svg><div class="a" style="left:46px;top:3px;font:bold 20px/22px 'Liberation Sans';color:#3a78e2;transform:scaleY(1.1);transform-origin:0 18px">B</div><div class="a" style="left:65px;top:3px;font:bold 20px/22px 'Liberation Sans';color:#3a78e2;transform:scaleY(1.1);transform-origin:0 18px">G</div><svg class="a" style="left:83px;top:4px" width="20" height="21" viewBox="0 0 20 21"><path d="M7 5.3 H3 Q1.6 5.3 1.6 6.7 V17.2 Q1.6 18.6 3 18.6 H12.1 Q13.5 18.6 13.5 17.2 V12.4" fill="none" stroke="#3a78e2" stroke-width="2.2" stroke-linecap="round"/><path d="M6.8 10.5 L14.05 3.16 L16.35 5.22 L9 12.68Z M5 13.8 L6.1 11.9 L7.4 13.3Z" fill="#3a78e2"/><path d="M15.9 1.8 L17.5 3.3" stroke="#3a78e2" stroke-width="1.7" stroke-linecap="round"/></svg><svg class="a" style="left:101px;top:4px" width="21" height="21" viewBox="0 0 21 21"><path d="M14.2 1 L20 6.5 L19.2 7.4 L17.2 7.6 L13.1 12.6 L13.7 14.5 L12.6 16.1 L4.3 8.3 L5.9 7.4 L7.6 7.9 L13.2 3.4 L13.2 1.7Z" fill="#3a78e2"/><path d="M7.8 12.4 L9.6 14 L1.4 20 L0.9 19.5Z" fill="#3a78e2"/></svg></div>
<div class="c rt" style="left:165px;width:49px">1</div>
<div class="c lt" style="left:215px;width:119px">445660000000</div>
<div class="c lt" style="left:335px;width:119px"></div>
<div class="c lt" style="left:455px;width:399px">Crédit bail</div>
<div class="c rt" style="left:855px;width:99px">200,00</div>
<div class="c rt" style="left:955px;width:99px"></div>
<div class="c lt" style="left:1155px;width:299px">2021</div>
</div>
<div class="row r" style="top:422px;color:#000">
<div class="vl" style="left:144px"></div>
<div class="vl" style="left:164px"></div>
<div class="vl" style="left:214px"></div>
<div class="vl" style="left:334px"></div>
<div class="vl" style="left:454px"></div>
<div class="vl" style="left:854px"></div>
<div class="vl" style="left:954px"></div>
<div class="vl" style="left:1054px"></div>
<div class="vl" style="left:1154px"></div>
<div class="vl" style="left:1454px"></div>
<div class="vl" style="left:1554px"></div>
<div class="a" style="left:0;top:0;width:145px;height:28px"><div class="a" style="left:7px;top:6px;width:16px;height:16px;border-radius:50%;background:#ffff00;border:1.3px solid #000"></div><div class="a" style="left:11px;top:5px;font:italic bold 13px/17px 'Liberation Serif';color:#000">i</div><svg class="a" style="left:25px;top:6px" width="20" height="18" viewBox="0 0 20 18"><ellipse cx="10" cy="7" rx="9.5" ry="6.8" fill="#3a78e2"/><path d="M4 11 Q4 15 1.5 17 Q7 16.5 9.5 12.5Z" fill="#3a78e2"/></svg><div class="a" style="left:46px;top:3px;font:bold 20px/22px 'Liberation Sans';color:#3a78e2;transform:scaleY(1.1);transform-origin:0 18px">B</div><div class="a" style="left:65px;top:3px;font:bold 20px/22px 'Liberation Sans';color:#3a78e2;transform:scaleY(1.1);transform-origin:0 18px">G</div><svg class="a" style="left:83px;top:4px" width="20" height="21" viewBox="0 0 20 21"><path d="M7 5.3 H3 Q1.6 5.3 1.6 6.7 V17.2 Q1.6 18.6 3 18.6 H12.1 Q13.5 18.6 13.5 17.2 V12.4" fill="none" stroke="#3a78e2" stroke-width="2.2" stroke-linecap="round"/><path d="M6.8 10.5 L14.05 3.16 L16.35 5.22 L9 12.68Z M5 13.8 L6.1 11.9 L7.4 13.3Z" fill="#3a78e2"/><path d="M15.9 1.8 L17.5 3.3" stroke="#3a78e2" stroke-width="1.7" stroke-linecap="round"/></svg><svg class="a" style="left:101px;top:4px" width="21" height="21" viewBox="0 0 21 21"><path d="M14.2 1 L20 6.5 L19.2 7.4 L17.2 7.6 L13.1 12.6 L13.7 14.5 L12.6 16.1 L4.3 8.3 L5.9 7.4 L7.6 7.9 L13.2 3.4 L13.2 1.7Z" fill="#3a78e2"/><path d="M7.8 12.4 L9.6 14 L1.4 20 L0.9 19.5Z" fill="#3a78e2"/></svg></div>
<div class="c rt" style="left:165px;width:49px">1</div>
<div class="c lt" style="left:215px;width:119px">401000000000</div>
<div class="c lt" style="left:335px;width:119px">9EDF00000000</div>
<div class="c lt" style="left:455px;width:399px">Abonnement 1er semestre</div>
<div class="c rt" style="left:855px;width:99px"></div>
<div class="c rt" style="left:955px;width:99px">100,00</div>
<div class="c lt" style="left:1155px;width:299px">NR</div>
</div>
<div class="row r sep" style="top:451px;color:#000">
<div class="vl" style="left:144px"></div>
<div class="vl" style="left:164px"></div>
<div class="vl" style="left:214px"></div>
<div class="vl" style="left:334px"></div>
<div class="vl" style="left:454px"></div>
<div class="vl" style="left:854px"></div>
<div class="vl" style="left:954px"></div>
<div class="vl" style="left:1054px"></div>
<div class="vl" style="left:1154px"></div>
<div class="vl" style="left:1454px"></div>
<div class="vl" style="left:1554px"></div>
<div class="a" style="left:0;top:0;width:145px;height:28px"><div class="a" style="left:7px;top:6px;width:16px;height:16px;border-radius:50%;background:#ffff00;border:1.3px solid #000"></div><div class="a" style="left:11px;top:5px;font:italic bold 13px/17px 'Liberation Serif';color:#000">i</div><svg class="a" style="left:25px;top:6px" width="20" height="18" viewBox="0 0 20 18"><ellipse cx="10" cy="7" rx="9.5" ry="6.8" fill="#3a78e2"/><path d="M4 11 Q4 15 1.5 17 Q7 16.5 9.5 12.5Z" fill="#3a78e2"/></svg><div class="a" style="left:46px;top:3px;font:bold 20px/22px 'Liberation Sans';color:#3a78e2;transform:scaleY(1.1);transform-origin:0 18px">B</div><div class="a" style="left:65px;top:3px;font:bold 20px/22px 'Liberation Sans';color:#3a78e2;transform:scaleY(1.1);transform-origin:0 18px">G</div><svg class="a" style="left:83px;top:4px" width="20" height="21" viewBox="0 0 20 21"><path d="M7 5.3 H3 Q1.6 5.3 1.6 6.7 V17.2 Q1.6 18.6 3 18.6 H12.1 Q13.5 18.6 13.5 17.2 V12.4" fill="none" stroke="#3a78e2" stroke-width="2.2" stroke-linecap="round"/><path d="M6.8 10.5 L14.05 3.16 L16.35 5.22 L9 12.68Z M5 13.8 L6.1 11.9 L7.4 13.3Z" fill="#3a78e2"/><path d="M15.9 1.8 L17.5 3.3" stroke="#3a78e2" stroke-width="1.7" stroke-linecap="round"/></svg><svg class="a" style="left:101px;top:4px" width="21" height="21" viewBox="0 0 21 21"><path d="M14.2 1 L20 6.5 L19.2 7.4 L17.2 7.6 L13.1 12.6 L13.7 14.5 L12.6 16.1 L4.3 8.3 L5.9 7.4 L7.6 7.9 L13.2 3.4 L13.2 1.7Z" fill="#3a78e2"/><path d="M7.8 12.4 L9.6 14 L1.4 20 L0.9 19.5Z" fill="#3a78e2"/></svg></div>
<div class="a" style="left:145px;top:0;width:20px;height:28px"><svg class="a" style="left:3.9px;top:8px" width="15" height="14" viewBox="0 0 15 14"><path d="M5 0 H9.2 L14 13 H10 L9.2 10.7 H4.9 L4.1 13 H0Z M5.7 8.1 H8.4 L7.05 4.3Z" fill="#0a850a" fill-rule="evenodd"/></svg></div>
<div class="c rt" style="left:165px;width:49px">1</div>
<div class="c lt" style="left:215px;width:119px">607000000000</div>
<div class="c lt" style="left:335px;width:119px"></div>
<div class="c lt" style="left:455px;width:399px">Abonnement 1er semestre</div>
<div class="c rt" style="left:855px;width:99px">100,00</div>
<div class="c rt" style="left:955px;width:99px"></div>
<div class="c lt" style="left:1155px;width:299px">NR</div>
</div>
<div class="row w" style="top:480px;color:#111">
<div class="vl" style="left:144px"></div>
<div class="vl" style="left:164px"></div>
<div class="vl" style="left:214px"></div>
<div class="vl" style="left:334px"></div>
<div class="vl" style="left:454px"></div>
<div class="vl" style="left:854px"></div>
<div class="vl" style="left:954px"></div>
<div class="vl" style="left:1054px"></div>
<div class="vl" style="left:1154px"></div>
<div class="vl" style="left:1454px"></div>
<div class="vl" style="left:1554px"></div>
<div class="a" style="left:0;top:0;width:145px;height:28px"><div class="a" style="left:7px;top:6px;width:16px;height:16px;border-radius:50%;background:#ffff00;border:1.3px solid #000"></div><div class="a" style="left:11px;top:5px;font:italic bold 13px/17px 'Liberation Serif';color:#000">i</div><svg class="a" style="left:25px;top:6px" width="20" height="18" viewBox="0 0 20 18"><ellipse cx="10" cy="7" rx="9.5" ry="6.8" fill="#3a78e2"/><path d="M4 11 Q4 15 1.5 17 Q7 16.5 9.5 12.5Z" fill="#3a78e2"/></svg><div class="a" style="left:46px;top:3px;font:bold 20px/22px 'Liberation Sans';color:#3a78e2;transform:scaleY(1.1);transform-origin:0 18px">B</div><div class="a" style="left:65px;top:3px;font:bold 20px/22px 'Liberation Sans';color:#3a78e2;transform:scaleY(1.1);transform-origin:0 18px">G</div><svg class="a" style="left:83px;top:4px" width="20" height="21" viewBox="0 0 20 21"><path d="M7 5.3 H3 Q1.6 5.3 1.6 6.7 V17.2 Q1.6 18.6 3 18.6 H12.1 Q13.5 18.6 13.5 17.2 V12.4" fill="none" stroke="#3a78e2" stroke-width="2.2" stroke-linecap="round"/><path d="M6.8 10.5 L14.05 3.16 L16.35 5.22 L9 12.68Z M5 13.8 L6.1 11.9 L7.4 13.3Z" fill="#3a78e2"/><path d="M15.9 1.8 L17.5 3.3" stroke="#3a78e2" stroke-width="1.7" stroke-linecap="round"/></svg><svg class="a" style="left:101px;top:4px" width="21" height="21" viewBox="0 0 21 21"><path d="M14.2 1 L20 6.5 L19.2 7.4 L17.2 7.6 L13.1 12.6 L13.7 14.5 L12.6 16.1 L4.3 8.3 L5.9 7.4 L7.6 7.9 L13.2 3.4 L13.2 1.7Z" fill="#3a78e2"/><path d="M7.8 12.4 L9.6 14 L1.4 20 L0.9 19.5Z" fill="#3a78e2"/></svg></div>
<div class="c rt" style="left:165px;width:49px">1</div>
<div class="c lt" style="left:215px;width:119px">401000000000</div>
<div class="c lt" style="left:335px;width:119px">9INTER000000</div>
<div class="c lt" style="left:455px;width:399px">FACTURE-INTERFLORA</div>
<div class="c rt" style="left:855px;width:99px"></div>
<div class="c rt" style="left:955px;width:99px">4 759,20</div>
<div class="c lt" style="left:1155px;width:299px">FINTER02</div>
</div>
<div class="row g" style="top:509px;color:#111">
<div class="vl" style="left:144px"></div>
<div class="vl" style="left:164px"></div>
<div class="vl" style="left:214px"></div>
<div class="vl" style="left:334px"></div>
<div class="vl" style="left:454px"></div>
<div class="vl" style="left:854px"></div>
<div class="vl" style="left:954px"></div>
<div class="vl" style="left:1054px"></div>
<div class="vl" style="left:1154px"></div>
<div class="vl" style="left:1454px"></div>
<div class="vl" style="left:1554px"></div>
<div class="a" style="left:0;top:0;width:145px;height:28px"><div class="a" style="left:7px;top:6px;width:16px;height:16px;border-radius:50%;background:#ffff00;border:1.3px solid #000"></div><div class="a" style="left:11px;top:5px;font:italic bold 13px/17px 'Liberation Serif';color:#000">i</div><svg class="a" style="left:25px;top:6px" width="20" height="18" viewBox="0 0 20 18"><ellipse cx="10" cy="7" rx="9.5" ry="6.8" fill="#3a78e2"/><path d="M4 11 Q4 15 1.5 17 Q7 16.5 9.5 12.5Z" fill="#3a78e2"/></svg><div class="a" style="left:46px;top:3px;font:bold 20px/22px 'Liberation Sans';color:#3a78e2;transform:scaleY(1.1);transform-origin:0 18px">B</div><div class="a" style="left:65px;top:3px;font:bold 20px/22px 'Liberation Sans';color:#3a78e2;transform:scaleY(1.1);transform-origin:0 18px">G</div><svg class="a" style="left:83px;top:4px" width="20" height="21" viewBox="0 0 20 21"><path d="M7 5.3 H3 Q1.6 5.3 1.6 6.7 V17.2 Q1.6 18.6 3 18.6 H12.1 Q13.5 18.6 13.5 17.2 V12.4" fill="none" stroke="#3a78e2" stroke-width="2.2" stroke-linecap="round"/><path d="M6.8 10.5 L14.05 3.16 L16.35 5.22 L9 12.68Z M5 13.8 L6.1 11.9 L7.4 13.3Z" fill="#3a78e2"/><path d="M15.9 1.8 L17.5 3.3" stroke="#3a78e2" stroke-width="1.7" stroke-linecap="round"/></svg><svg class="a" style="left:101px;top:4px" width="21" height="21" viewBox="0 0 21 21"><path d="M14.2 1 L20 6.5 L19.2 7.4 L17.2 7.6 L13.1 12.6 L13.7 14.5 L12.6 16.1 L4.3 8.3 L5.9 7.4 L7.6 7.9 L13.2 3.4 L13.2 1.7Z" fill="#3a78e2"/><path d="M7.8 12.4 L9.6 14 L1.4 20 L0.9 19.5Z" fill="#3a78e2"/></svg></div>
<div class="a" style="left:145px;top:0;width:20px;height:28px"><svg class="a" style="left:3.9px;top:8px" width="15" height="14" viewBox="0 0 15 14"><path d="M5 0 H9.2 L14 13 H10 L9.2 10.7 H4.9 L4.1 13 H0Z M5.7 8.1 H8.4 L7.05 4.3Z" fill="#0a850a" fill-rule="evenodd"/></svg></div>
<div class="c rt" style="left:165px;width:49px">1</div>
<div class="c lt" style="left:215px;width:119px">607000000000</div>
<div class="c lt" style="left:335px;width:119px"></div>
<div class="c lt" style="left:455px;width:399px">FACTURE-INTERFLORA</div>
<div class="c rt" style="left:855px;width:99px">3 966,00</div>
<div class="c rt" style="left:955px;width:99px"></div>
<div class="c lt" style="left:1155px;width:299px">FINTER02</div>
</div>
<div class="row w sep" style="top:538px;color:#111">
<div class="vl" style="left:144px"></div>
<div class="vl" style="left:164px"></div>
<div class="vl" style="left:214px"></div>
<div class="vl" style="left:334px"></div>
<div class="vl" style="left:454px"></div>
<div class="vl" style="left:854px"></div>
<div class="vl" style="left:954px"></div>
<div class="vl" style="left:1054px"></div>
<div class="vl" style="left:1154px"></div>
<div class="vl" style="left:1454px"></div>
<div class="vl" style="left:1554px"></div>
<div class="a" style="left:0;top:0;width:145px;height:28px"><div class="a" style="left:7px;top:6px;width:16px;height:16px;border-radius:50%;background:#ffff00;border:1.3px solid #000"></div><div class="a" style="left:11px;top:5px;font:italic bold 13px/17px 'Liberation Serif';color:#000">i</div><svg class="a" style="left:25px;top:6px" width="20" height="18" viewBox="0 0 20 18"><ellipse cx="10" cy="7" rx="9.5" ry="6.8" fill="#3a78e2"/><path d="M4 11 Q4 15 1.5 17 Q7 16.5 9.5 12.5Z" fill="#3a78e2"/></svg><div class="a" style="left:46px;top:3px;font:bold 20px/22px 'Liberation Sans';color:#3a78e2;transform:scaleY(1.1);transform-origin:0 18px">B</div><div class="a" style="left:65px;top:3px;font:bold 20px/22px 'Liberation Sans';color:#3a78e2;transform:scaleY(1.1);transform-origin:0 18px">G</div><svg class="a" style="left:83px;top:4px" width="20" height="21" viewBox="0 0 20 21"><path d="M7 5.3 H3 Q1.6 5.3 1.6 6.7 V17.2 Q1.6 18.6 3 18.6 H12.1 Q13.5 18.6 13.5 17.2 V12.4" fill="none" stroke="#3a78e2" stroke-width="2.2" stroke-linecap="round"/><path d="M6.8 10.5 L14.05 3.16 L16.35 5.22 L9 12.68Z M5 13.8 L6.1 11.9 L7.4 13.3Z" fill="#3a78e2"/><path d="M15.9 1.8 L17.5 3.3" stroke="#3a78e2" stroke-width="1.7" stroke-linecap="round"/></svg><svg class="a" style="left:101px;top:4px" width="21" height="21" viewBox="0 0 21 21"><path d="M14.2 1 L20 6.5 L19.2 7.4 L17.2 7.6 L13.1 12.6 L13.7 14.5 L12.6 16.1 L4.3 8.3 L5.9 7.4 L7.6 7.9 L13.2 3.4 L13.2 1.7Z" fill="#3a78e2"/><path d="M7.8 12.4 L9.6 14 L1.4 20 L0.9 19.5Z" fill="#3a78e2"/></svg></div>
<div class="c rt" style="left:165px;width:49px">1</div>
<div class="c lt" style="left:215px;width:119px">445660000000</div>
<div class="c lt" style="left:335px;width:119px"></div>
<div class="c lt" style="left:455px;width:399px">FACTURE-INTERFLORA</div>
<div class="c rt" style="left:855px;width:99px">793,20</div>
<div class="c rt" style="left:955px;width:99px"></div>
<div class="c lt" style="left:1155px;width:299px">FINTER02</div>
</div>
<div class="row g" style="top:567px;color:#111">
<div class="vl" style="left:144px"></div>
<div class="vl" style="left:164px"></div>
<div class="vl" style="left:214px"></div>
<div class="vl" style="left:334px"></div>
<div class="vl" style="left:454px"></div>
<div class="vl" style="left:854px"></div>
<div class="vl" style="left:954px"></div>
<div class="vl" style="left:1054px"></div>
<div class="vl" style="left:1154px"></div>
<div class="vl" style="left:1454px"></div>
<div class="vl" style="left:1554px"></div>
<div class="a" style="left:0;top:0;width:145px;height:28px"><div class="a" style="left:7px;top:6px;width:16px;height:16px;border-radius:50%;background:#ffff00;border:1.3px solid #000"></div><div class="a" style="left:11px;top:5px;font:italic bold 13px/17px 'Liberation Serif';color:#000">i</div><svg class="a" style="left:25px;top:6px" width="20" height="18" viewBox="0 0 20 18"><ellipse cx="10" cy="7" rx="9.5" ry="6.8" fill="#3a78e2"/><path d="M4 11 Q4 15 1.5 17 Q7 16.5 9.5 12.5Z" fill="#3a78e2"/></svg><div class="a" style="left:46px;top:3px;font:bold 20px/22px 'Liberation Sans';color:#3a78e2;transform:scaleY(1.1);transform-origin:0 18px">B</div><div class="a" style="left:65px;top:3px;font:bold 20px/22px 'Liberation Sans';color:#3a78e2;transform:scaleY(1.1);transform-origin:0 18px">G</div><svg class="a" style="left:83px;top:4px" width="20" height="21" viewBox="0 0 20 21"><path d="M7 5.3 H3 Q1.6 5.3 1.6 6.7 V17.2 Q1.6 18.6 3 18.6 H12.1 Q13.5 18.6 13.5 17.2 V12.4" fill="none" stroke="#3a78e2" stroke-width="2.2" stroke-linecap="round"/><path d="M6.8 10.5 L14.05 3.16 L16.35 5.22 L9 12.68Z M5 13.8 L6.1 11.9 L7.4 13.3Z" fill="#3a78e2"/><path d="M15.9 1.8 L17.5 3.3" stroke="#3a78e2" stroke-width="1.7" stroke-linecap="round"/></svg><svg class="a" style="left:101px;top:4px" width="21" height="21" viewBox="0 0 21 21"><path d="M14.2 1 L20 6.5 L19.2 7.4 L17.2 7.6 L13.1 12.6 L13.7 14.5 L12.6 16.1 L4.3 8.3 L5.9 7.4 L7.6 7.9 L13.2 3.4 L13.2 1.7Z" fill="#3a78e2"/><path d="M7.8 12.4 L9.6 14 L1.4 20 L0.9 19.5Z" fill="#3a78e2"/></svg></div>
<div class="c rt" style="left:165px;width:49px">1</div>
<div class="c lt" style="left:215px;width:119px">401000000000</div>
<div class="c lt" style="left:335px;width:119px">9DIVERS00000</div>
<div class="c lt" style="left:455px;width:399px">Crédit bail</div>
<div class="c rt" style="left:855px;width:99px"></div>
<div class="c rt" style="left:955px;width:99px">1 200,00</div>
<div class="c lt" style="left:1155px;width:299px">2021</div>
</div>
<div class="row w" style="top:596px;color:#111">
<div class="vl" style="left:144px"></div>
<div class="vl" style="left:164px"></div>
<div class="vl" style="left:214px"></div>
<div class="vl" style="left:334px"></div>
<div class="vl" style="left:454px"></div>
<div class="vl" style="left:854px"></div>
<div class="vl" style="left:954px"></div>
<div class="vl" style="left:1054px"></div>
<div class="vl" style="left:1154px"></div>
<div class="vl" style="left:1454px"></div>
<div class="vl" style="left:1554px"></div>
<div class="a" style="left:0;top:0;width:145px;height:28px"><div class="a" style="left:7px;top:6px;width:16px;height:16px;border-radius:50%;background:#ffff00;border:1.3px solid #000"></div><div class="a" style="left:11px;top:5px;font:italic bold 13px/17px 'Liberation Serif';color:#000">i</div><svg class="a" style="left:25px;top:6px" width="20" height="18" viewBox="0 0 20 18"><ellipse cx="10" cy="7" rx="9.5" ry="6.8" fill="#3a78e2"/><path d="M4 11 Q4 15 1.5 17 Q7 16.5 9.5 12.5Z" fill="#3a78e2"/></svg><div class="a" style="left:46px;top:3px;font:bold 20px/22px 'Liberation Sans';color:#3a78e2;transform:scaleY(1.1);transform-origin:0 18px">B</div><div class="a" style="left:65px;top:3px;font:bold 20px/22px 'Liberation Sans';color:#3a78e2;transform:scaleY(1.1);transform-origin:0 18px">G</div><svg class="a" style="left:83px;top:4px" width="20" height="21" viewBox="0 0 20 21"><path d="M7 5.3 H3 Q1.6 5.3 1.6 6.7 V17.2 Q1.6 18.6 3 18.6 H12.1 Q13.5 18.6 13.5 17.2 V12.4" fill="none" stroke="#3a78e2" stroke-width="2.2" stroke-linecap="round"/><path d="M6.8 10.5 L14.05 3.16 L16.35 5.22 L9 12.68Z M5 13.8 L6.1 11.9 L7.4 13.3Z" fill="#3a78e2"/><path d="M15.9 1.8 L17.5 3.3" stroke="#3a78e2" stroke-width="1.7" stroke-linecap="round"/></svg><svg class="a" style="left:101px;top:4px" width="21" height="21" viewBox="0 0 21 21"><path d="M14.2 1 L20 6.5 L19.2 7.4 L17.2 7.6 L13.1 12.6 L13.7 14.5 L12.6 16.1 L4.3 8.3 L5.9 7.4 L7.6 7.9 L13.2 3.4 L13.2 1.7Z" fill="#3a78e2"/><path d="M7.8 12.4 L9.6 14 L1.4 20 L0.9 19.5Z" fill="#3a78e2"/></svg></div>
<div class="c rt" style="left:165px;width:49px">1</div>
<div class="c lt" style="left:215px;width:119px">612200000000</div>
<div class="c lt" style="left:335px;width:119px"></div>
<div class="c lt" style="left:455px;width:399px">Crédit bail</div>
<div class="c rt" style="left:855px;width:99px">1 000,00</div>
<div class="c rt" style="left:955px;width:99px"></div>
<div class="c lt" style="left:1155px;width:299px">2021</div>
</div>
<div class="row g sep" style="top:625px;color:#111">
<div class="vl" style="left:144px"></div>
<div class="vl" style="left:164px"></div>
<div class="vl" style="left:214px"></div>
<div class="vl" style="left:334px"></div>
<div class="vl" style="left:454px"></div>
<div class="vl" style="left:854px"></div>
<div class="vl" style="left:954px"></div>
<div class="vl" style="left:1054px"></div>
<div class="vl" style="left:1154px"></div>
<div class="vl" style="left:1454px"></div>
<div class="vl" style="left:1554px"></div>
<div class="a" style="left:0;top:0;width:145px;height:28px"><div class="a" style="left:7px;top:6px;width:16px;height:16px;border-radius:50%;background:#ffff00;border:1.3px solid #000"></div><div class="a" style="left:11px;top:5px;font:italic bold 13px/17px 'Liberation Serif';color:#000">i</div><svg class="a" style="left:25px;top:6px" width="20" height="18" viewBox="0 0 20 18"><ellipse cx="10" cy="7" rx="9.5" ry="6.8" fill="#3a78e2"/><path d="M4 11 Q4 15 1.5 17 Q7 16.5 9.5 12.5Z" fill="#3a78e2"/></svg><div class="a" style="left:46px;top:3px;font:bold 20px/22px 'Liberation Sans';color:#3a78e2;transform:scaleY(1.1);transform-origin:0 18px">B</div><div class="a" style="left:65px;top:3px;font:bold 20px/22px 'Liberation Sans';color:#3a78e2;transform:scaleY(1.1);transform-origin:0 18px">G</div><svg class="a" style="left:83px;top:4px" width="20" height="21" viewBox="0 0 20 21"><path d="M7 5.3 H3 Q1.6 5.3 1.6 6.7 V17.2 Q1.6 18.6 3 18.6 H12.1 Q13.5 18.6 13.5 17.2 V12.4" fill="none" stroke="#3a78e2" stroke-width="2.2" stroke-linecap="round"/><path d="M6.8 10.5 L14.05 3.16 L16.35 5.22 L9 12.68Z M5 13.8 L6.1 11.9 L7.4 13.3Z" fill="#3a78e2"/><path d="M15.9 1.8 L17.5 3.3" stroke="#3a78e2" stroke-width="1.7" stroke-linecap="round"/></svg><svg class="a" style="left:101px;top:4px" width="21" height="21" viewBox="0 0 21 21"><path d="M14.2 1 L20 6.5 L19.2 7.4 L17.2 7.6 L13.1 12.6 L13.7 14.5 L12.6 16.1 L4.3 8.3 L5.9 7.4 L7.6 7.9 L13.2 3.4 L13.2 1.7Z" fill="#3a78e2"/><path d="M7.8 12.4 L9.6 14 L1.4 20 L0.9 19.5Z" fill="#3a78e2"/></svg></div>
<div class="c rt" style="left:165px;width:49px">1</div>
<div class="c lt" style="left:215px;width:119px">445660000000</div>
<div class="c lt" style="left:335px;width:119px"></div>
<div class="c lt" style="left:455px;width:399px">Crédit bail</div>
<div class="c rt" style="left:855px;width:99px">200,00</div>
<div class="c rt" style="left:955px;width:99px"></div>
<div class="c lt" style="left:1155px;width:299px">2021</div>
</div>
<div class="row w" style="top:654px;color:#111">
<div class="vl" style="left:144px"></div>
<div class="vl" style="left:164px"></div>
<div class="vl" style="left:214px"></div>
<div class="vl" style="left:334px"></div>
<div class="vl" style="left:454px"></div>
<div class="vl" style="left:854px"></div>
<div class="vl" style="left:954px"></div>
<div class="vl" style="left:1054px"></div>
<div class="vl" style="left:1154px"></div>
<div class="vl" style="left:1454px"></div>
<div class="vl" style="left:1554px"></div>
<div class="a" style="left:0;top:0;width:145px;height:28px"><div class="a" style="left:7px;top:6px;width:16px;height:16px;border-radius:50%;background:#ffff00;border:1.3px solid #000"></div><div class="a" style="left:11px;top:5px;font:italic bold 13px/17px 'Liberation Serif';color:#000">i</div><svg class="a" style="left:25px;top:6px" width="20" height="18" viewBox="0 0 20 18"><ellipse cx="10" cy="7" rx="9.5" ry="6.8" fill="#3a78e2"/><path d="M4 11 Q4 15 1.5 17 Q7 16.5 9.5 12.5Z" fill="#3a78e2"/></svg><div class="a" style="left:46px;top:3px;font:bold 20px/22px 'Liberation Sans';color:#3a78e2;transform:scaleY(1.1);transform-origin:0 18px">B</div><div class="a" style="left:65px;top:3px;font:bold 20px/22px 'Liberation Sans';color:#3a78e2;transform:scaleY(1.1);transform-origin:0 18px">G</div><svg class="a" style="left:83px;top:4px" width="20" height="21" viewBox="0 0 20 21"><path d="M7 5.3 H3 Q1.6 5.3 1.6 6.7 V17.2 Q1.6 18.6 3 18.6 H12.1 Q13.5 18.6 13.5 17.2 V12.4" fill="none" stroke="#3a78e2" stroke-width="2.2" stroke-linecap="round"/><path d="M6.8 10.5 L14.05 3.16 L16.35 5.22 L9 12.68Z M5 13.8 L6.1 11.9 L7.4 13.3Z" fill="#3a78e2"/><path d="M15.9 1.8 L17.5 3.3" stroke="#3a78e2" stroke-width="1.7" stroke-linecap="round"/></svg><svg class="a" style="left:101px;top:4px" width="21" height="21" viewBox="0 0 21 21"><path d="M14.2 1 L20 6.5 L19.2 7.4 L17.2 7.6 L13.1 12.6 L13.7 14.5 L12.6 16.1 L4.3 8.3 L5.9 7.4 L7.6 7.9 L13.2 3.4 L13.2 1.7Z" fill="#3a78e2"/><path d="M7.8 12.4 L9.6 14 L1.4 20 L0.9 19.5Z" fill="#3a78e2"/></svg></div>
<div class="c rt" style="left:165px;width:49px">1</div>
<div class="c lt" style="left:215px;width:119px">621100000000</div>
<div class="c lt" style="left:335px;width:119px"></div>
<div class="c lt" style="left:455px;width:399px">Personnel intérimaire</div>
<div class="c rt" style="left:855px;width:99px">2 000,00</div>
<div class="c rt" style="left:955px;width:99px"></div>
<div class="c lt" style="left:1155px;width:299px">NR</div>
</div>
<div class="row g" style="top:683px;color:#111">
<div class="vl" style="left:144px"></div>
<div class="vl" style="left:164px"></div>
<div class="vl" style="left:214px"></div>
<div class="vl" style="left:334px"></div>
<div class="vl" style="left:454px"></div>
<div class="vl" style="left:854px"></div>
<div class="vl" style="left:954px"></div>
<div class="vl" style="left:1054px"></div>
<div class="vl" style="left:1154px"></div>
<div class="vl" style="left:1454px"></div>
<div class="vl" style="left:1554px"></div>
<div class="a" style="left:0;top:0;width:145px;height:28px"><div class="a" style="left:7px;top:6px;width:16px;height:16px;border-radius:50%;background:#ffff00;border:1.3px solid #000"></div><div class="a" style="left:11px;top:5px;font:italic bold 13px/17px 'Liberation Serif';color:#000">i</div><svg class="a" style="left:25px;top:6px" width="20" height="18" viewBox="0 0 20 18"><ellipse cx="10" cy="7" rx="9.5" ry="6.8" fill="#3a78e2"/><path d="M4 11 Q4 15 1.5 17 Q7 16.5 9.5 12.5Z" fill="#3a78e2"/></svg><div class="a" style="left:46px;top:3px;font:bold 20px/22px 'Liberation Sans';color:#3a78e2;transform:scaleY(1.1);transform-origin:0 18px">B</div><div class="a" style="left:65px;top:3px;font:bold 20px/22px 'Liberation Sans';color:#3a78e2;transform:scaleY(1.1);transform-origin:0 18px">G</div><svg class="a" style="left:83px;top:4px" width="20" height="21" viewBox="0 0 20 21"><path d="M7 5.3 H3 Q1.6 5.3 1.6 6.7 V17.2 Q1.6 18.6 3 18.6 H12.1 Q13.5 18.6 13.5 17.2 V12.4" fill="none" stroke="#3a78e2" stroke-width="2.2" stroke-linecap="round"/><path d="M6.8 10.5 L14.05 3.16 L16.35 5.22 L9 12.68Z M5 13.8 L6.1 11.9 L7.4 13.3Z" fill="#3a78e2"/><path d="M15.9 1.8 L17.5 3.3" stroke="#3a78e2" stroke-width="1.7" stroke-linecap="round"/></svg><svg class="a" style="left:101px;top:4px" width="21" height="21" viewBox="0 0 21 21"><path d="M14.2 1 L20 6.5 L19.2 7.4 L17.2 7.6 L13.1 12.6 L13.7 14.5 L12.6 16.1 L4.3 8.3 L5.9 7.4 L7.6 7.9 L13.2 3.4 L13.2 1.7Z" fill="#3a78e2"/><path d="M7.8 12.4 L9.6 14 L1.4 20 L0.9 19.5Z" fill="#3a78e2"/></svg></div>
<div class="c rt" style="left:165px;width:49px">1</div>
<div class="c lt" style="left:215px;width:119px">401000000000</div>
<div class="c lt" style="left:335px;width:119px">9INTERIM0000</div>
<div class="c lt" style="left:455px;width:399px">Personnel intérimaire</div>
<div class="c rt" style="left:855px;width:99px"></div>
<div class="c rt" style="left:955px;width:99px">2 400,00</div>
<div class="c lt" style="left:1155px;width:299px">NR</div>
</div>
<div class="row w sep" style="top:712px;color:#111">
<div class="vl" style="left:144px"></div>
<div class="vl" style="left:164px"></div>
<div class="vl" style="left:214px"></div>
<div class="vl" style="left:334px"></div>
<div class="vl" style="left:454px"></div>
<div class="vl" style="left:854px"></div>
<div class="vl" style="left:954px"></div>
<div class="vl" style="left:1054px"></div>
<div class="vl" style="left:1154px"></div>
<div class="vl" style="left:1454px"></div>
<div class="vl" style="left:1554px"></div>
<div class="a" style="left:0;top:0;width:145px;height:28px"><div class="a" style="left:7px;top:6px;width:16px;height:16px;border-radius:50%;background:#ffff00;border:1.3px solid #000"></div><div class="a" style="left:11px;top:5px;font:italic bold 13px/17px 'Liberation Serif';color:#000">i</div><svg class="a" style="left:25px;top:6px" width="20" height="18" viewBox="0 0 20 18"><ellipse cx="10" cy="7" rx="9.5" ry="6.8" fill="#3a78e2"/><path d="M4 11 Q4 15 1.5 17 Q7 16.5 9.5 12.5Z" fill="#3a78e2"/></svg><div class="a" style="left:46px;top:3px;font:bold 20px/22px 'Liberation Sans';color:#3a78e2;transform:scaleY(1.1);transform-origin:0 18px">B</div><div class="a" style="left:65px;top:3px;font:bold 20px/22px 'Liberation Sans';color:#3a78e2;transform:scaleY(1.1);transform-origin:0 18px">G</div><svg class="a" style="left:83px;top:4px" width="20" height="21" viewBox="0 0 20 21"><path d="M7 5.3 H3 Q1.6 5.3 1.6 6.7 V17.2 Q1.6 18.6 3 18.6 H12.1 Q13.5 18.6 13.5 17.2 V12.4" fill="none" stroke="#3a78e2" stroke-width="2.2" stroke-linecap="round"/><path d="M6.8 10.5 L14.05 3.16 L16.35 5.22 L9 12.68Z M5 13.8 L6.1 11.9 L7.4 13.3Z" fill="#3a78e2"/><path d="M15.9 1.8 L17.5 3.3" stroke="#3a78e2" stroke-width="1.7" stroke-linecap="round"/></svg><svg class="a" style="left:101px;top:4px" width="21" height="21" viewBox="0 0 21 21"><path d="M14.2 1 L20 6.5 L19.2 7.4 L17.2 7.6 L13.1 12.6 L13.7 14.5 L12.6 16.1 L4.3 8.3 L5.9 7.4 L7.6 7.9 L13.2 3.4 L13.2 1.7Z" fill="#3a78e2"/><path d="M7.8 12.4 L9.6 14 L1.4 20 L0.9 19.5Z" fill="#3a78e2"/></svg></div>
<div class="c rt" style="left:165px;width:49px">1</div>
<div class="c lt" style="left:215px;width:119px">445660000000</div>
<div class="c lt" style="left:335px;width:119px"></div>
<div class="c lt" style="left:455px;width:399px">Personnel intérimaire</div>
<div class="c rt" style="left:855px;width:99px">400,00</div>
<div class="c rt" style="left:955px;width:99px"></div>
<div class="c lt" style="left:1155px;width:299px">NR</div>
</div>
<div class="row g" style="top:741px;color:#111">
<div class="vl" style="left:144px"></div>
<div class="vl" style="left:164px"></div>
<div class="vl" style="left:214px"></div>
<div class="vl" style="left:334px"></div>
<div class="vl" style="left:454px"></div>
<div class="vl" style="left:854px"></div>
<div class="vl" style="left:954px"></div>
<div class="vl" style="left:1054px"></div>
<div class="vl" style="left:1154px"></div>
<div class="vl" style="left:1454px"></div>
<div class="vl" style="left:1554px"></div>
<div class="a" style="left:0;top:0;width:145px;height:28px"><div class="a" style="left:7px;top:6px;width:16px;height:16px;border-radius:50%;background:#ffff00;border:1.3px solid #000"></div><div class="a" style="left:11px;top:5px;font:italic bold 13px/17px 'Liberation Serif';color:#000">i</div><svg class="a" style="left:25px;top:6px" width="20" height="18" viewBox="0 0 20 18"><ellipse cx="10" cy="7" rx="9.5" ry="6.8" fill="#3a78e2"/><path d="M4 11 Q4 15 1.5 17 Q7 16.5 9.5 12.5Z" fill="#3a78e2"/></svg><div class="a" style="left:46px;top:3px;font:bold 20px/22px 'Liberation Sans';color:#3a78e2;transform:scaleY(1.1);transform-origin:0 18px">B</div><div class="a" style="left:65px;top:3px;font:bold 20px/22px 'Liberation Sans';color:#3a78e2;transform:scaleY(1.1);transform-origin:0 18px">G</div><svg class="a" style="left:83px;top:4px" width="20" height="21" viewBox="0 0 20 21"><path d="M7 5.3 H3 Q1.6 5.3 1.6 6.7 V17.2 Q1.6 18.6 3 18.6 H12.1 Q13.5 18.6 13.5 17.2 V12.4" fill="none" stroke="#3a78e2" stroke-width="2.2" stroke-linecap="round"/><path d="M6.8 10.5 L14.05 3.16 L16.35 5.22 L9 12.68Z M5 13.8 L6.1 11.9 L7.4 13.3Z" fill="#3a78e2"/><path d="M15.9 1.8 L17.5 3.3" stroke="#3a78e2" stroke-width="1.7" stroke-linecap="round"/></svg><svg class="a" style="left:101px;top:4px" width="21" height="21" viewBox="0 0 21 21"><path d="M14.2 1 L20 6.5 L19.2 7.4 L17.2 7.6 L13.1 12.6 L13.7 14.5 L12.6 16.1 L4.3 8.3 L5.9 7.4 L7.6 7.9 L13.2 3.4 L13.2 1.7Z" fill="#3a78e2"/><path d="M7.8 12.4 L9.6 14 L1.4 20 L0.9 19.5Z" fill="#3a78e2"/></svg></div>
<div class="c rt" style="left:165px;width:49px">1</div>
<div class="c lt" style="left:215px;width:119px">455000000000</div>
<div class="c lt" style="left:335px;width:119px"></div>
<div class="c lt" style="left:455px;width:399px">Intérimaires</div>
<div class="c rt" style="left:855px;width:99px">120,00</div>
<div class="c rt" style="left:955px;width:99px"></div>
<div class="c lt" style="left:1155px;width:299px">NR</div>
</div>
<div class="row w sep" style="top:770px;color:#111">
<div class="vl" style="left:144px"></div>
<div class="vl" style="left:164px"></div>
<div class="vl" style="left:214px"></div>
<div class="vl" style="left:334px"></div>
<div class="vl" style="left:454px"></div>
<div class="vl" style="left:854px"></div>
<div class="vl" style="left:954px"></div>
<div class="vl" style="left:1054px"></div>
<div class="vl" style="left:1154px"></div>
<div class="vl" style="left:1454px"></div>
<div class="vl" style="left:1554px"></div>
<div class="a" style="left:0;top:0;width:145px;height:28px"><div class="a" style="left:7px;top:6px;width:16px;height:16px;border-radius:50%;background:#ffff00;border:1.3px solid #000"></div><div class="a" style="left:11px;top:5px;font:italic bold 13px/17px 'Liberation Serif';color:#000">i</div><svg class="a" style="left:25px;top:6px" width="20" height="18" viewBox="0 0 20 18"><ellipse cx="10" cy="7" rx="9.5" ry="6.8" fill="#3a78e2"/><path d="M4 11 Q4 15 1.5 17 Q7 16.5 9.5 12.5Z" fill="#3a78e2"/></svg><div class="a" style="left:46px;top:3px;font:bold 20px/22px 'Liberation Sans';color:#3a78e2;transform:scaleY(1.1);transform-origin:0 18px">B</div><div class="a" style="left:65px;top:3px;font:bold 20px/22px 'Liberation Sans';color:#3a78e2;transform:scaleY(1.1);transform-origin:0 18px">G</div><svg class="a" style="left:83px;top:4px" width="20" height="21" viewBox="0 0 20 21"><path d="M7 5.3 H3 Q1.6 5.3 1.6 6.7 V17.2 Q1.6 18.6 3 18.6 H12.1 Q13.5 18.6 13.5 17.2 V12.4" fill="none" stroke="#3a78e2" stroke-width="2.2" stroke-linecap="round"/><path d="M6.8 10.5 L14.05 3.16 L16.35 5.22 L9 12.68Z M5 13.8 L6.1 11.9 L7.4 13.3Z" fill="#3a78e2"/><path d="M15.9 1.8 L17.5 3.3" stroke="#3a78e2" stroke-width="1.7" stroke-linecap="round"/></svg><svg class="a" style="left:101px;top:4px" width="21" height="21" viewBox="0 0 21 21"><path d="M14.2 1 L20 6.5 L19.2 7.4 L17.2 7.6 L13.1 12.6 L13.7 14.5 L12.6 16.1 L4.3 8.3 L5.9 7.4 L7.6 7.9 L13.2 3.4 L13.2 1.7Z" fill="#3a78e2"/><path d="M7.8 12.4 L9.6 14 L1.4 20 L0.9 19.5Z" fill="#3a78e2"/></svg></div>
<div class="c rt" style="left:165px;width:49px">1</div>
<div class="c lt" style="left:215px;width:119px">487000000000</div>
<div class="c lt" style="left:335px;width:119px"></div>
<div class="c lt" style="left:455px;width:399px">Intérimaires</div>
<div class="c rt" style="left:855px;width:99px"></div>
<div class="c rt" style="left:955px;width:99px">120,00</div>
<div class="c lt" style="left:1155px;width:299px">NR</div>
</div>
<div class="row g" style="top:799px;color:#111">
<div class="vl" style="left:144px"></div>
<div class="vl" style="left:164px"></div>
<div class="vl" style="left:214px"></div>
<div class="vl" style="left:334px"></div>
<div class="vl" style="left:454px"></div>
<div class="vl" style="left:854px"></div>
<div class="vl" style="left:954px"></div>
<div class="vl" style="left:1054px"></div>
<div class="vl" style="left:1154px"></div>
<div class="vl" style="left:1454px"></div>
<div class="vl" style="left:1554px"></div>
<div class="a" style="left:0;top:0;width:145px;height:28px"><div class="a" style="left:7px;top:6px;width:16px;height:16px;border-radius:50%;background:#ffff00;border:1.3px solid #000"></div><div class="a" style="left:11px;top:5px;font:italic bold 13px/17px 'Liberation Serif';color:#000">i</div><svg class="a" style="left:25px;top:6px" width="20" height="18" viewBox="0 0 20 18"><ellipse cx="10" cy="7" rx="9.5" ry="6.8" fill="#3a78e2"/><path d="M4 11 Q4 15 1.5 17 Q7 16.5 9.5 12.5Z" fill="#3a78e2"/></svg><div class="a" style="left:46px;top:3px;font:bold 20px/22px 'Liberation Sans';color:#3a78e2;transform:scaleY(1.1);transform-origin:0 18px">B</div><div class="a" style="left:65px;top:3px;font:bold 20px/22px 'Liberation Sans';color:#3a78e2;transform:scaleY(1.1);transform-origin:0 18px">G</div><svg class="a" style="left:83px;top:4px" width="20" height="21" viewBox="0 0 20 21"><path d="M7 5.3 H3 Q1.6 5.3 1.6 6.7 V17.2 Q1.6 18.6 3 18.6 H12.1 Q13.5 18.6 13.5 17.2 V12.4" fill="none" stroke="#3a78e2" stroke-width="2.2" stroke-linecap="round"/><path d="M6.8 10.5 L14.05 3.16 L16.35 5.22 L9 12.68Z M5 13.8 L6.1 11.9 L7.4 13.3Z" fill="#3a78e2"/><path d="M15.9 1.8 L17.5 3.3" stroke="#3a78e2" stroke-width="1.7" stroke-linecap="round"/></svg><svg class="a" style="left:101px;top:4px" width="21" height="21" viewBox="0 0 21 21"><path d="M14.2 1 L20 6.5 L19.2 7.4 L17.2 7.6 L13.1 12.6 L13.7 14.5 L12.6 16.1 L4.3 8.3 L5.9 7.4 L7.6 7.9 L13.2 3.4 L13.2 1.7Z" fill="#3a78e2"/><path d="M7.8 12.4 L9.6 14 L1.4 20 L0.9 19.5Z" fill="#3a78e2"/></svg></div>
<div class="c rt" style="left:165px;width:49px">1</div>
<div class="c lt" style="left:215px;width:119px">411000000000</div>
<div class="c lt" style="left:335px;width:119px">0LEROY000000</div>
<div class="c lt" style="left:455px;width:399px">FACTURE-LEROY</div>
<div class="c rt" style="left:855px;width:99px">55,68</div>
<div class="c rt" style="left:955px;width:99px"></div>
<div class="c lt" style="left:1155px;width:299px">8</div>
</div>
<div class="row w" style="top:828px;color:#111">
<div class="vl" style="left:144px"></div>
<div class="vl" style="left:164px"></div>
<div class="vl" style="left:214px"></div>
<div class="vl" style="left:334px"></div>
<div class="vl" style="left:454px"></div>
<div class="vl" style="left:854px"></div>
<div class="vl" style="left:954px"></div>
<div class="vl" style="left:1054px"></div>
<div class="vl" style="left:1154px"></div>
<div class="vl" style="left:1454px"></div>
<div class="vl" style="left:1554px"></div>
<div class="a" style="left:0;top:0;width:145px;height:28px"><div class="a" style="left:7px;top:6px;width:16px;height:16px;border-radius:50%;background:#ffff00;border:1.3px solid #000"></div><div class="a" style="left:11px;top:5px;font:italic bold 13px/17px 'Liberation Serif';color:#000">i</div><svg class="a" style="left:25px;top:6px" width="20" height="18" viewBox="0 0 20 18"><ellipse cx="10" cy="7" rx="9.5" ry="6.8" fill="#3a78e2"/><path d="M4 11 Q4 15 1.5 17 Q7 16.5 9.5 12.5Z" fill="#3a78e2"/></svg><div class="a" style="left:46px;top:3px;font:bold 20px/22px 'Liberation Sans';color:#3a78e2;transform:scaleY(1.1);transform-origin:0 18px">B</div><div class="a" style="left:65px;top:3px;font:bold 20px/22px 'Liberation Sans';color:#3a78e2;transform:scaleY(1.1);transform-origin:0 18px">G</div><svg class="a" style="left:83px;top:4px" width="20" height="21" viewBox="0 0 20 21"><path d="M7 5.3 H3 Q1.6 5.3 1.6 6.7 V17.2 Q1.6 18.6 3 18.6 H12.1 Q13.5 18.6 13.5 17.2 V12.4" fill="none" stroke="#3a78e2" stroke-width="2.2" stroke-linecap="round"/><path d="M6.8 10.5 L14.05 3.16 L16.35 5.22 L9 12.68Z M5 13.8 L6.1 11.9 L7.4 13.3Z" fill="#3a78e2"/><path d="M15.9 1.8 L17.5 3.3" stroke="#3a78e2" stroke-width="1.7" stroke-linecap="round"/></svg><svg class="a" style="left:101px;top:4px" width="21" height="21" viewBox="0 0 21 21"><path d="M14.2 1 L20 6.5 L19.2 7.4 L17.2 7.6 L13.1 12.6 L13.7 14.5 L12.6 16.1 L4.3 8.3 L5.9 7.4 L7.6 7.9 L13.2 3.4 L13.2 1.7Z" fill="#3a78e2"/><path d="M7.8 12.4 L9.6 14 L1.4 20 L0.9 19.5Z" fill="#3a78e2"/></svg></div>
<div class="a" style="left:145px;top:0;width:20px;height:28px"><svg class="a" style="left:3.9px;top:8px" width="15" height="14" viewBox="0 0 15 14"><path d="M5 0 H9.2 L14 13 H10 L9.2 10.7 H4.9 L4.1 13 H0Z M5.7 8.1 H8.4 L7.05 4.3Z" fill="#0a850a" fill-rule="evenodd"/></svg></div>
<div class="c rt" style="left:165px;width:49px">1</div>
<div class="c lt" style="left:215px;width:119px">607000000000</div>
<div class="c lt" style="left:335px;width:119px"></div>
<div class="c lt" style="left:455px;width:399px">FACTURE-LEROY</div>
<div class="c rt" style="left:855px;width:99px"></div>
<div class="c rt" style="left:955px;width:99px">46,40</div>
<div class="c lt" style="left:1155px;width:299px">8</div>
</div>
<div class="row g sep" style="top:857px;color:#111">
<div class="vl" style="left:144px"></div>
<div class="vl" style="left:164px"></div>
<div class="vl" style="left:214px"></div>
<div class="vl" style="left:334px"></div>
<div class="vl" style="left:454px"></div>
<div class="vl" style="left:854px"></div>
<div class="vl" style="left:954px"></div>
<div class="vl" style="left:1054px"></div>
<div class="vl" style="left:1154px"></div>
<div class="vl" style="left:1454px"></div>
<div class="vl" style="left:1554px"></div>
<div class="a" style="left:0;top:0;width:145px;height:28px"><div class="a" style="left:7px;top:6px;width:16px;height:16px;border-radius:50%;background:#ffff00;border:1.3px solid #000"></div><div class="a" style="left:11px;top:5px;font:italic bold 13px/17px 'Liberation Serif';color:#000">i</div><svg class="a" style="left:25px;top:6px" width="20" height="18" viewBox="0 0 20 18"><ellipse cx="10" cy="7" rx="9.5" ry="6.8" fill="#3a78e2"/><path d="M4 11 Q4 15 1.5 17 Q7 16.5 9.5 12.5Z" fill="#3a78e2"/></svg><div class="a" style="left:46px;top:3px;font:bold 20px/22px 'Liberation Sans';color:#3a78e2;transform:scaleY(1.1);transform-origin:0 18px">B</div><div class="a" style="left:65px;top:3px;font:bold 20px/22px 'Liberation Sans';color:#3a78e2;transform:scaleY(1.1);transform-origin:0 18px">G</div><svg class="a" style="left:83px;top:4px" width="20" height="21" viewBox="0 0 20 21"><path d="M7 5.3 H3 Q1.6 5.3 1.6 6.7 V17.2 Q1.6 18.6 3 18.6 H12.1 Q13.5 18.6 13.5 17.2 V12.4" fill="none" stroke="#3a78e2" stroke-width="2.2" stroke-linecap="round"/><path d="M6.8 10.5 L14.05 3.16 L16.35 5.22 L9 12.68Z M5 13.8 L6.1 11.9 L7.4 13.3Z" fill="#3a78e2"/><path d="M15.9 1.8 L17.5 3.3" stroke="#3a78e2" stroke-width="1.7" stroke-linecap="round"/></svg><svg class="a" style="left:101px;top:4px" width="21" height="21" viewBox="0 0 21 21"><path d="M14.2 1 L20 6.5 L19.2 7.4 L17.2 7.6 L13.1 12.6 L13.7 14.5 L12.6 16.1 L4.3 8.3 L5.9 7.4 L7.6 7.9 L13.2 3.4 L13.2 1.7Z" fill="#3a78e2"/><path d="M7.8 12.4 L9.6 14 L1.4 20 L0.9 19.5Z" fill="#3a78e2"/></svg></div>
<div class="c rt" style="left:165px;width:49px">1</div>
<div class="c lt" style="left:215px;width:119px">445710000000</div>
<div class="c lt" style="left:335px;width:119px"></div>
<div class="c lt" style="left:455px;width:399px">FACTURE-LEROY</div>
<div class="c rt" style="left:855px;width:99px"></div>
<div class="c rt" style="left:955px;width:99px">9,28</div>
<div class="c lt" style="left:1155px;width:299px">8</div>
</div>
<div class="row w" style="top:886px;color:#111">
<div class="vl" style="left:144px"></div>
<div class="vl" style="left:164px"></div>
<div class="vl" style="left:214px"></div>
<div class="vl" style="left:334px"></div>
<div class="vl" style="left:454px"></div>
<div class="vl" style="left:854px"></div>
<div class="vl" style="left:954px"></div>
<div class="vl" style="left:1054px"></div>
<div class="vl" style="left:1154px"></div>
<div class="vl" style="left:1454px"></div>
<div class="vl" style="left:1554px"></div>
<div class="a" style="left:0;top:0;width:145px;height:28px"><div class="a" style="left:7px;top:6px;width:16px;height:16px;border-radius:50%;background:#ffff00;border:1.3px solid #000"></div><div class="a" style="left:11px;top:5px;font:italic bold 13px/17px 'Liberation Serif';color:#000">i</div><svg class="a" style="left:25px;top:6px" width="20" height="18" viewBox="0 0 20 18"><ellipse cx="10" cy="7" rx="9.5" ry="6.8" fill="#3a78e2"/><path d="M4 11 Q4 15 1.5 17 Q7 16.5 9.5 12.5Z" fill="#3a78e2"/></svg><div class="a" style="left:46px;top:3px;font:bold 20px/22px 'Liberation Sans';color:#3a78e2;transform:scaleY(1.1);transform-origin:0 18px">B</div><div class="a" style="left:65px;top:3px;font:bold 20px/22px 'Liberation Sans';color:#3a78e2;transform:scaleY(1.1);transform-origin:0 18px">G</div><svg class="a" style="left:83px;top:4px" width="20" height="21" viewBox="0 0 20 21"><path d="M7 5.3 H3 Q1.6 5.3 1.6 6.7 V17.2 Q1.6 18.6 3 18.6 H12.1 Q13.5 18.6 13.5 17.2 V12.4" fill="none" stroke="#3a78e2" stroke-width="2.2" stroke-linecap="round"/><path d="M6.8 10.5 L14.05 3.16 L16.35 5.22 L9 12.68Z M5 13.8 L6.1 11.9 L7.4 13.3Z" fill="#3a78e2"/><path d="M15.9 1.8 L17.5 3.3" stroke="#3a78e2" stroke-width="1.7" stroke-linecap="round"/></svg><svg class="a" style="left:101px;top:4px" width="21" height="21" viewBox="0 0 21 21"><path d="M14.2 1 L20 6.5 L19.2 7.4 L17.2 7.6 L13.1 12.6 L13.7 14.5 L12.6 16.1 L4.3 8.3 L5.9 7.4 L7.6 7.9 L13.2 3.4 L13.2 1.7Z" fill="#3a78e2"/><path d="M7.8 12.4 L9.6 14 L1.4 20 L0.9 19.5Z" fill="#3a78e2"/></svg></div>
<div class="c rt" style="left:165px;width:49px">1</div>
<div class="c lt" style="left:215px;width:119px">401000000000</div>
<div class="c lt" style="left:335px;width:119px">9EDF00000000</div>
<div class="c lt" style="left:455px;width:399px">EDF</div>
<div class="c rt" style="left:855px;width:99px"></div>
<div class="c rt" style="left:955px;width:99px">100,00</div>
<div class="c lt" style="left:1155px;width:299px">NR</div>
</div>
<div class="row g" style="top:915px;color:#111">
<div class="vl" style="left:144px"></div>
<div class="vl" style="left:164px"></div>
<div class="vl" style="left:214px"></div>
<div class="vl" style="left:334px"></div>
<div class="vl" style="left:454px"></div>
<div class="vl" style="left:854px"></div>
<div class="vl" style="left:954px"></div>
<div class="vl" style="left:1054px"></div>
<div class="vl" style="left:1154px"></div>
<div class="vl" style="left:1454px"></div>
<div class="vl" style="left:1554px"></div>
<div class="a" style="left:0;top:0;width:145px;height:28px"><div class="a" style="left:7px;top:6px;width:16px;height:16px;border-radius:50%;background:#ffff00;border:1.3px solid #000"></div><div class="a" style="left:11px;top:5px;font:italic bold 13px/17px 'Liberation Serif';color:#000">i</div><svg class="a" style="left:25px;top:6px" width="20" height="18" viewBox="0 0 20 18"><ellipse cx="10" cy="7" rx="9.5" ry="6.8" fill="#3a78e2"/><path d="M4 11 Q4 15 1.5 17 Q7 16.5 9.5 12.5Z" fill="#3a78e2"/></svg><div class="a" style="left:46px;top:3px;font:bold 20px/22px 'Liberation Sans';color:#3a78e2;transform:scaleY(1.1);transform-origin:0 18px">B</div><div class="a" style="left:65px;top:3px;font:bold 20px/22px 'Liberation Sans';color:#3a78e2;transform:scaleY(1.1);transform-origin:0 18px">G</div><svg class="a" style="left:83px;top:4px" width="20" height="21" viewBox="0 0 20 21"><path d="M7 5.3 H3 Q1.6 5.3 1.6 6.7 V17.2 Q1.6 18.6 3 18.6 H12.1 Q13.5 18.6 13.5 17.2 V12.4" fill="none" stroke="#3a78e2" stroke-width="2.2" stroke-linecap="round"/><path d="M6.8 10.5 L14.05 3.16 L16.35 5.22 L9 12.68Z M5 13.8 L6.1 11.9 L7.4 13.3Z" fill="#3a78e2"/><path d="M15.9 1.8 L17.5 3.3" stroke="#3a78e2" stroke-width="1.7" stroke-linecap="round"/></svg><svg class="a" style="left:101px;top:4px" width="21" height="21" viewBox="0 0 21 21"><path d="M14.2 1 L20 6.5 L19.2 7.4 L17.2 7.6 L13.1 12.6 L13.7 14.5 L12.6 16.1 L4.3 8.3 L5.9 7.4 L7.6 7.9 L13.2 3.4 L13.2 1.7Z" fill="#3a78e2"/><path d="M7.8 12.4 L9.6 14 L1.4 20 L0.9 19.5Z" fill="#3a78e2"/></svg></div>
<div class="c rt" style="left:165px;width:49px">1</div>
<div class="c lt" style="left:215px;width:119px">606100000000</div>
<div class="c lt" style="left:335px;width:119px"></div>
<div class="c lt" style="left:455px;width:399px">ACHATS FOURNITURES NON STOCKABLE</div>
<div class="c rt" style="left:855px;width:99px">100,00</div>
<div class="c rt" style="left:955px;width:99px"></div>
<div class="c lt" style="left:1155px;width:299px">NR</div>
</div>
<div class="a" style="left:246px;top:944px;width:1630px;height:30px;background:#c2cee5;border-bottom:1px solid #3575e2"></div>
<div class="a" style="left:259px;top:952px;line-height:16px;color:#7aa0e4">1</div>
<svg class="a" style="left:284px;top:954px" width="23" height="12" viewBox="0 0 23 12"><path d="M0 6 L8 1 V11Z" fill="#7aa0e4"/><path d="M7 6 L15 1 V11Z" fill="#7aa0e4"/><path d="M14 6 L22 1 V11Z" fill="#7aa0e4"/></svg>
<svg class="a" style="left:320px;top:954px" width="16" height="12" viewBox="0 0 16 12"><path d="M0 6 L8 1 V11Z" fill="#7aa0e4"/><path d="M7 6 L15 1 V11Z" fill="#7aa0e4"/></svg>
<svg class="a" style="left:357px;top:954px" width="9" height="12" viewBox="0 0 9 12"><path d="M0 6 L8 1 V11Z" fill="#7aa0e4"/></svg>
<div class="a" style="left:380px;top:945px;width:28px;height:27px;background:#fff"></div>
<div class="a" style="left:380px;top:945px;width:25px;line-height:27px;text-align:right;font-size:13px">1</div>
<svg class="a" style="left:422px;top:954px" width="9" height="12" viewBox="0 0 9 12"><path d="M0 1 L8 6 L0 11Z" fill="#3575e2"/></svg>
<svg class="a" style="left:452px;top:954px" width="16" height="12" viewBox="0 0 16 12"><path d="M0 1 L8 6 L0 11Z" fill="#7aa0e4"/><path d="M7 1 L15 6 L7 11Z" fill="#7aa0e4"/></svg>
<svg class="a" style="left:482px;top:954px" width="23" height="12" viewBox="0 0 23 12"><path d="M0 1 L8 6 L0 11Z" fill="#7aa0e4"/><path d="M7 1 L15 6 L7 11Z" fill="#7aa0e4"/><path d="M14 1 L22 6 L14 11Z" fill="#7aa0e4"/></svg>
<div class="a" style="left:525px;top:952px;line-height:16px;color:#3575e2">6</div>
<div class="a" style="left:246px;top:943px;width:1px;height:31px;background:#3575e2"></div>
<div class="a" style="left:1817px;top:955px;line-height:16px;color:#3575e2">1 à 24 sur 1</div>
<div class="a" style="left:1877px;top:940px;width:43px;height:40px;background:#fff"></div>
<div class="a" style="left:246px;top:974px;width:1630px;height:17px;background:#f1f1f1"></div>
<div class="a" style="left:263px;top:974px;width:1565px;height:17px;background:#cdcdcd"></div>
<svg class="a" style="left:250px;top:978px" width="10" height="10" viewBox="0 0 10 10"><path d="M6.5 1.5 L3 5 L6.5 8.5" fill="none" stroke="#555" stroke-width="1.6"/></svg>
<svg class="a" style="left:1862px;top:978px" width="10" height="10" viewBox="0 0 10 10"><path d="M3.5 1.5 L7 5 L3.5 8.5" fill="none" stroke="#555" stroke-width="1.6"/></svg>
<div class="a" style="left:29px;top:1014px;width:1862px;height:1px;background:#777"></div>
<div class="btn bg" style="left:29px;top:1023px;width:127px">Nouvelles écritures</div>
<div class="btn bg" style="left:164px;top:1023px;width:164px">Nouvelles écritures (bêta)</div>
<div class="btn bb" style="left:336px;top:1023px;width:88px">Tableau stat</div>
<div class="btn bb" style="left:1228px;top:1023px;width:70px">Déplacer</div>
<div class="btn bb" style="left:1307px;top:1023px;width:55px">Copier</div>
<div class="btn bb" style="left:1372px;top:1023px;width:96px">Contrepasser</div>
<div class="btn bb" style="left:1477px;top:1023px;width:75px">Extourner</div>
<div class="btn br" style="left:1561px;top:1023px;width:78px">Supprimer</div>
<div class="btn bb" style="left:1648px;top:1023px;width:147px">Définir comme modèle</div>
<div class="btn bb" style="left:1228px;top:1052px;width:90px">Vider journal</div>
<div class="btn bb" style="left:1328px;top:1052px;width:117px">Extourner journal</div>
<div class="btn bb" style="left:1454px;top:1052px;width:106px">Param. Journal</div>
<div class="btn bb" style="left:1569px;top:1052px;width:94px">Editer journal</div>
<div class="btn bb" style="left:1673px;top:1052px;width:98px">Copier journal</div>
<div class="btn bb" style="left:1780px;top:1052px;width:112px">Déplacer journal</div>
<div class="a" style="left:412px;top:395px;width:118px;height:140px;background:#ffff33;border-radius:4px"></div>
<table class="a" style="left:420px;top:400px;border-collapse:collapse;font-size:12px;white-space:normal">
<tr><td colspan="2" style="border:1px solid #000;height:26px;padding-bottom:2px;text-align:center;font-weight:bold;width:101px">Géographique</td></tr>
<tr><td style="border:1px solid #000;height:26px;padding:0 0 2px 4px;width:61px">Epinal</td><td style="border:1px solid #000;text-align:right;padding:0 5px 2px 0">20,00</td></tr>
<tr><td style="border:1px solid #000;height:26px;padding:0 0 2px 4px">Metz</td><td style="border:1px solid #000;text-align:right;padding:0 5px 2px 0">35,00</td></tr>
<tr><td style="border:1px solid #000;height:26px;padding:0 0 2px 4px">Nancy</td><td style="border:1px solid #000;text-align:right;padding:0 5px 2px 0">25,00</td></tr>
<tr><td style="border:1px solid #000;height:26px;padding:0 0 2px 4px">Thionville</td><td style="border:1px solid #000;text-align:right;padding:0 5px 2px 0">20,00</td></tr>
</table>
<svg class="a" style="left:398px;top:469px" width="20" height="30" viewBox="0 0 20 30"><path d="M6 2.5 Q6 1 7.5 1 Q9 1 9 2.5 V11 Q9.5 9.8 11 9.8 Q12.5 9.8 12.6 11.5 Q13 10.3 14.4 10.3 Q15.9 10.4 16 12 Q16.4 11.2 17.5 11.3 Q19 11.5 19 13 V20 Q19 24 16.5 27 H8.5 Q6.5 24.5 4 21 L1.5 17 Q1 15.5 2.3 15 Q3.5 14.6 4.5 15.8 L6 17.5Z" fill="#fff" stroke="#000" stroke-width="1.1"/><path d="M9 11 V17 M12.6 11.5 V17 M16 12 V17" stroke="#000" stroke-width="0.9"/></svg>
</body></html>
